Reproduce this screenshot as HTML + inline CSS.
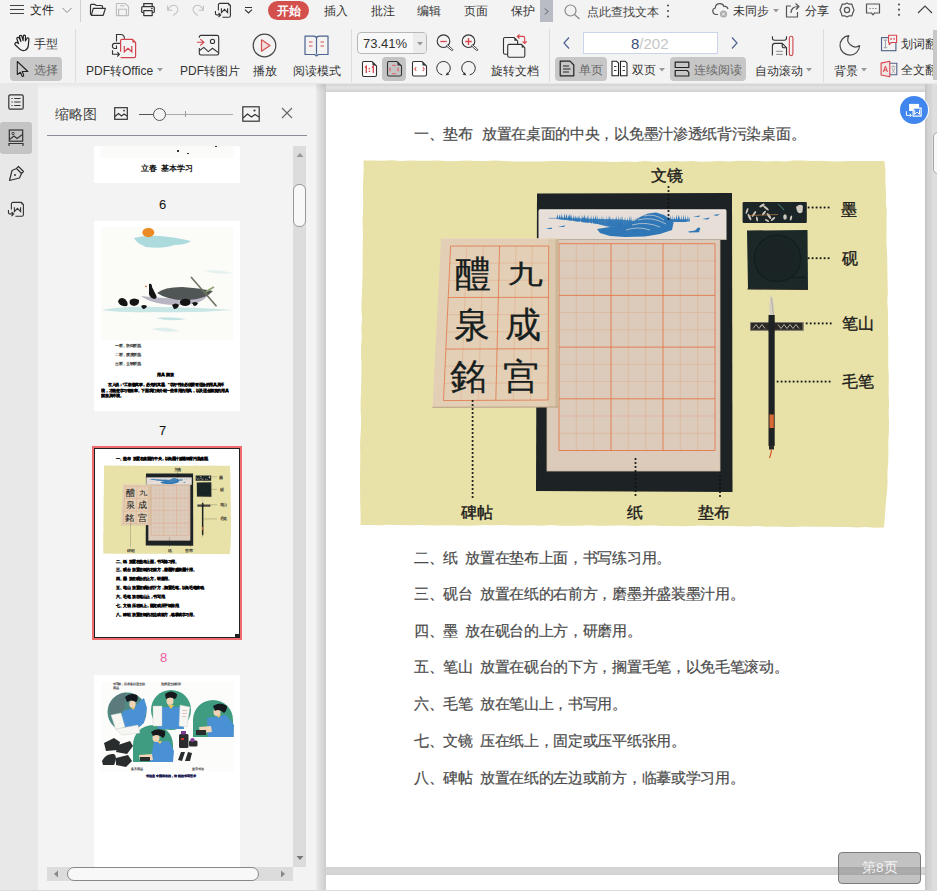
<!DOCTYPE html>
<html><head><meta charset="utf-8">
<style>
*{box-sizing:border-box;margin:0;padding:0}
html,body{width:937px;height:891px;overflow:hidden;background:#f3f3f3;font-family:"Liberation Sans",sans-serif;color:#333}
.a{position:absolute}
.t{position:absolute;white-space:nowrap;line-height:1}
.ln{font-size:14.7px;letter-spacing:-0.3px;color:#4a4a4a;-webkit-text-stroke:0.2px #4a4a4a}
#top{left:0;top:0;width:937px;height:84px;background:#f3f3f3}
#rail{left:0;top:84px;width:38px;height:807px;background:#e8e8e8}
#panel{left:38px;top:84px;width:278px;height:807px;background:#f3f3f3}
#doc{left:316px;top:84px;width:621px;height:807px;background:#dadada}
#page{left:326px;top:92px;width:599px;height:775px;background:#fff;overflow:hidden}
#page2{left:326px;top:875px;width:599px;height:16px;background:#fff}
.th3 .ln{color:#000;font-weight:bold;-webkit-text-stroke:0.4px #000}
.th3 .t{-webkit-text-stroke:1px #000}
.th2t{color:#222;-webkit-text-stroke:0.6px #222}
.th2b{color:#000;font-weight:bold;-webkit-text-stroke:1px #000}
.th4t{color:#444;-webkit-text-stroke:0.5px #444}
.th4b{color:#1d2250;font-weight:bold;-webkit-text-stroke:1px #1d2250}

</style></head><body>
<div id="top" class="a"></div>
<!-- ROW 1 -->
<svg class="a" style="left:10px;top:4px" width="15" height="12" viewBox="0 0 15 12"><path d="M0 1.5H14M0 5.5H14M0 9.5H14" stroke="#444" stroke-width="1"/></svg>
<div class="t" style="left:30px;top:4px;font-size:12px;color:#222">文件</div>
<svg class="a" style="left:62px;top:7px" width="10" height="7" viewBox="0 0 10 7"><path d="M0.5 1L5 5.5L9.5 1" stroke="#888" stroke-width="1" fill="none"/></svg>
<div class="a" style="left:80px;top:0;width:1px;height:22px;background:#d0d0d0"></div>
<!-- folder -->
<svg class="a" style="left:89px;top:3px" width="18" height="14" viewBox="0 0 18 14"><path d="M1.5 11.8V2.3Q1.5 1.4 2.4 1.4H5.8L7.3 2.5H12.6Q13.5 2.5 13.5 3.4V5.2" stroke="#333" stroke-width="1.2" fill="none" stroke-linejoin="round"/><path d="M2.3 12.3L4.3 5.4H16.4L14.2 12.3Z" stroke="#333" stroke-width="1.2" fill="none" stroke-linejoin="round"/></svg>
<!-- save (disabled) -->
<svg class="a" style="left:115px;top:2px" width="15" height="15" viewBox="0 0 15 15"><path d="M2.1 1.5H10.4L13.5 4.6V13Q13.5 13.6 12.9 13.6H2.1Q1.4 13.6 1.4 13V2.2Q1.4 1.5 2.1 1.5Z" stroke="#bdbdbd" stroke-width="1.1" fill="none"/><path d="M5 3.7H9.6M3.6 13.6V7.2H11.4V13.6" stroke="#bdbdbd" stroke-width="1.1" fill="none"/></svg>
<!-- print -->
<svg class="a" style="left:140px;top:2px" width="16" height="15" viewBox="0 0 16 15"><path d="M3.8 4.5V1.6H12.2V4.5" stroke="#333" stroke-width="1.2" fill="none"/><path d="M3.5 10.5H2.7Q1.7 10.5 1.7 9.5V5.6Q1.7 4.6 2.7 4.6H13.3Q14.3 4.6 14.3 5.6V9.5Q14.3 10.5 13.3 10.5H12.5" stroke="#333" stroke-width="1.2" fill="none"/><path d="M10.9 6.6H12.7" stroke="#333" stroke-width="1"/><path d="M3.8 8.7H12.2V13.6H3.8Z" stroke="#333" stroke-width="1.2" fill="none" stroke-linejoin="round"/></svg>
<!-- undo -->
<svg class="a" style="left:166px;top:3px" width="14" height="14" viewBox="0 0 14 14"><path d="M2.2 6.6C3.5 3.6 5.8 2.3 7.6 2.3C10 2.3 11.9 4 11.9 6.5C11.9 8.6 10.3 10.4 7.2 12.6M1.6 2.4V7.2H6.3" stroke="#c2c2c2" stroke-width="1.1" fill="none"/></svg>
<!-- redo -->
<svg class="a" style="left:191px;top:3px" width="14" height="14" viewBox="0 0 14 14"><path d="M11.8 6.6C10.5 3.6 8.2 2.3 6.4 2.3C4 2.3 2.1 4 2.1 6.5C2.1 8.6 3.7 10.4 6.8 12.6M12.4 2.4V7.2H7.7" stroke="#c2c2c2" stroke-width="1.1" fill="none"/></svg>
<!-- export W -->
<svg class="a" style="left:214px;top:2px" width="18" height="17" viewBox="0 0 18 17"><path d="M4.4 8.6V2.9Q4.4 1.4 5.9 1.4H14.4L16.4 3.4V13.8Q16.4 15.3 14.9 15.3H8.4" stroke="#333" stroke-width="1.1" fill="none"/><path d="M14.4 1.6L16.2 3.4H14.4Z" fill="#333"/><path d="M7.4 6.2V10.7L10.5 7.4L13.6 10.7V6.2" stroke="#333" stroke-width="1.1" fill="none"/><path d="M1.45 9.1V11.5Q1.45 12.9 2.8 12.9H6.6M4.5 10.8L6.7 12.9L4.5 15.1" stroke="#333" stroke-width="1.1" fill="none"/></svg>
<svg class="a" style="left:244px;top:6px" width="9" height="9" viewBox="0 0 9 9"><path d="M1 1.5H8 M1 3.6L4.5 7L8 3.6" stroke="#333" stroke-width="1.1" fill="none"/></svg>
<!-- tabs -->
<div class="a" style="left:268px;top:1px;width:41px;height:19px;border-radius:10px;background:#d3504d"></div>
<div class="t" style="left:277px;top:5px;font-size:12px;color:#fff;font-weight:bold">开始</div>
<div class="t" style="left:324px;top:5px;font-size:12px;color:#333">插入</div>
<div class="t" style="left:371px;top:5px;font-size:12px;color:#333">批注</div>
<div class="t" style="left:417px;top:5px;font-size:12px;color:#333">编辑</div>
<div class="t" style="left:464px;top:5px;font-size:12px;color:#333">页面</div>
<div class="t" style="left:511px;top:5px;font-size:12px;color:#333">保护</div>
<div class="a" style="left:540px;top:0;width:13px;height:22px;background:#b9bcc4"></div>
<svg class="a" style="left:544px;top:8px" width="5" height="7" viewBox="0 0 5 7"><path d="M1 0.5L4 3.5L1 6.5" stroke="#555" stroke-width="1" fill="none"/></svg>
<!-- search -->
<svg class="a" style="left:564px;top:4px" width="17" height="16" viewBox="0 0 17 16"><circle cx="6.5" cy="6.5" r="5.5" stroke="#888" stroke-width="1.2" fill="none"/><path d="M10.5 10.5L15.5 15" stroke="#888" stroke-width="1.2"/></svg>
<div class="t" style="left:587px;top:6px;font-size:12px;color:#444">点此查找文本</div>
<svg class="a" style="left:666px;top:4px" width="4" height="15" viewBox="0 0 4 15"><circle cx="2" cy="1.5" r="1.1" fill="#555"/><circle cx="2" cy="7" r="1.1" fill="#555"/><circle cx="2" cy="12.5" r="1.1" fill="#555"/></svg>
<!-- cloud -->
<svg class="a" style="left:712px;top:2px" width="18" height="16" viewBox="0 0 18 16"><path d="M6 12.5H4A3.3 3.3 0 0 1 3.3 6A4.5 4.5 0 0 1 12 4.5A3.5 3.5 0 0 1 16 7" stroke="#555" stroke-width="1.2" fill="none"/><circle cx="11.5" cy="12" r="3.6" fill="#aaa"/><path d="M10 10.5L13 13.5M13 10.5L10 13.5" stroke="#fff" stroke-width="1"/></svg>
<div class="t" style="left:733px;top:5px;font-size:12px;color:#333">未同步</div>
<svg class="a" style="left:773px;top:9px" width="6" height="4" viewBox="0 0 6 4"><path d="M0 0H6L3 3.5Z" fill="#999"/></svg>
<!-- share -->
<svg class="a" style="left:785px;top:2px" width="16" height="16" viewBox="0 0 16 16"><path d="M6 4H1.5V15H12.5V10 M6 11C6 6.5 9 4.5 13 4.5 M10.5 1.5L14 4.5L11 7.5" stroke="#555" stroke-width="1.2" fill="none" stroke-linejoin="round"/></svg>
<div class="t" style="left:805px;top:5px;font-size:12px;color:#333">分享</div>
<!-- gear -->
<svg class="a" style="left:839px;top:2px" width="16" height="16" viewBox="0 0 16 16"><path d="M8 1L10.2 2.2L12.9 2.2L13.6 4.6L15 8L13.6 11.4L12.9 13.8L10.2 13.8L8 15L5.8 13.8L3.1 13.8L2.4 11.4L1 8L2.4 4.6L3.1 2.2L5.8 2.2Z" stroke="#555" stroke-width="1.2" fill="none" stroke-linejoin="round"/><circle cx="8" cy="8" r="2.6" stroke="#555" stroke-width="1.2" fill="none"/></svg>
<!-- comment -->
<svg class="a" style="left:865px;top:3px" width="16" height="14" viewBox="0 0 16 14"><path d="M1.5 1H14.5V10H9.5L8 11.8L6.5 10H1.5Z" stroke="#555" stroke-width="1.2" fill="none" stroke-linejoin="round"/><path d="M4.5 5.5H6M7.3 5.5H8.8M10 5.5H11.5" stroke="#888" stroke-width="1.2"/></svg>
<svg class="a" style="left:897px;top:3px" width="4" height="15" viewBox="0 0 4 15"><circle cx="2" cy="1.5" r="1.1" fill="#555"/><circle cx="2" cy="6.7" r="1.1" fill="#555"/><circle cx="2" cy="11.8" r="1.1" fill="#555"/></svg>
<svg class="a" style="left:917px;top:5px" width="16" height="9" viewBox="0 0 16 9"><path d="M1 8L8 1L15 8" stroke="#444" stroke-width="1.2" fill="none"/></svg>

<!-- ROW 2 -->
<!-- hand -->
<svg class="a" style="left:13px;top:34px" width="18" height="18" viewBox="0 0 18 18"><path d="M1.9 9.6Q2.6 8 4 8.6L5.6 9.6L3.9 5Q3.6 3.6 5 3.3Q5.8 3.2 6.4 4.2L7.9 7.4L6.6 2.6Q6.4 1.4 7.6 1.3Q8.5 1.2 8.9 2.3L10.1 6.7L10.4 2Q10.6 1 11.6 1.1Q12.6 1.3 12.5 2.4L12.4 7L14 4.3Q14.6 3.6 15.4 4Q16.2 4.5 15.9 5.4L15.3 11.6Q15 14.9 12.2 16.2Q9.6 17.2 7.3 15.6L2.6 11.2Q1.6 10.4 1.9 9.6Z" stroke="#222" stroke-width="1.2" fill="none" stroke-linejoin="round"/></svg>
<div class="t" style="left:34px;top:38px;font-size:12px;color:#333">手型</div>
<div class="a" style="left:10px;top:57px;width:52px;height:24px;border-radius:4px;background:#c7c7c7"></div>
<svg class="a" style="left:16px;top:60px" width="14" height="18" viewBox="0 0 14 18"><path d="M1.3 1.5V14.5L4.5 12.3L5.9 15.8Q6.3 16.7 7.2 16.3Q8 15.9 7.6 15L6.3 11.5H11.9Z" stroke="#222" stroke-width="1.1" fill="none" stroke-linejoin="round"/></svg>
<div class="t" style="left:34px;top:64px;font-size:12px;color:#666">选择</div>
<div class="a" style="left:75px;top:29px;width:1px;height:53px;background:#dcdcdc"></div>
<!-- PDF to office -->
<svg class="a" style="left:110px;top:33px" width="28" height="27" viewBox="0 0 28 27"><g stroke="#333" stroke-width="1.1" fill="none"><path d="M6.5 8.6V1.5H10.5Q14.5 1.5 14.5 5.7"/><path d="M10.2 10.4H4.8Q2.4 10.4 2.4 13Q2.4 15.5 4.8 15.5H6.5V12.6"/><path d="M2.5 17.3V21.3H9.2M7.3 19.1L9.4 21.3L7.3 23.5"/></g><g stroke="#d3434b" stroke-width="1.2" fill="none"><path d="M10.6 18.8V7.8Q10.6 6.4 12 6.4H22.5L25.6 9.5V23.2Q25.6 24.6 24.2 24.6H10.6"/><path d="M14.3 13.1V18.8L18 15.4L21.8 18.8V13.1"/></g><path d="M22.4 6.7L25.3 9.6H22.4Z" fill="#d3434b"/></svg>
<div class="t" style="left:86px;top:65px;font-size:12px;color:#333">PDF转Office</div>
<svg class="a" style="left:157px;top:68px" width="6" height="4" viewBox="0 0 6 4"><path d="M0 0H6L3 3.5Z" fill="#999"/></svg>
<!-- PDF to image -->
<svg class="a" style="left:196px;top:34px" width="25" height="23" viewBox="0 0 25 23"><g stroke="#333" stroke-width="1.1" fill="none"><path d="M3.3 3.8V3.1Q3.3 1.4 5 1.4H21Q22.7 1.4 22.7 3.1V19.3Q22.7 21 21 21H5Q3.3 21 3.3 19.3V14.1"/><circle cx="16.5" cy="7.4" r="2.1"/><path d="M3.3 16.7L7.8 13.4L12.3 17.6L16.5 14.3L22.7 18.9"/></g><path d="M1 8.3H7.8M4.3 5.1L7.9 8.3L4.3 11.5" stroke="#d3434b" stroke-width="1.1" fill="none"/></svg>
<div class="t" style="left:180px;top:65px;font-size:12px;color:#333">PDF转图片</div>
<!-- play -->
<svg class="a" style="left:252px;top:33px" width="25" height="25" viewBox="0 0 25 25"><circle cx="12.5" cy="12.5" r="11.3" stroke="#444" stroke-width="1.2" fill="none"/><path d="M9.5 6.8V18.2L18 12.5Z" stroke="#d3504d" stroke-width="1.2" fill="#f3dede" stroke-linejoin="round"/></svg>
<div class="t" style="left:253px;top:65px;font-size:12px;color:#333">播放</div>
<!-- book -->
<svg class="a" style="left:304px;top:35px" width="25" height="22" viewBox="0 0 25 22"><path d="M1 1.2H9.5C11 1.2 12.5 2.2 12.5 3.5C12.5 2.2 14 1.2 15.5 1.2H24V19.5H14.5L12.5 21L10.5 19.5H1Z M12.5 3.5V19.5" stroke="#4d6390" stroke-width="1.2" fill="none" stroke-linejoin="round"/><path d="M5 7H8.5M5 11H8.5M16.5 7H20M16.5 11H20" stroke="#d3504d" stroke-width="1.2"/></svg>
<div class="t" style="left:293px;top:65px;font-size:12px;color:#333">阅读模式</div>
<div class="a" style="left:351px;top:29px;width:1px;height:53px;background:#dcdcdc"></div>
<!-- zoom combo -->
<div class="a" style="left:357px;top:32px;width:70px;height:22px;border:1px solid #b8b8b8;border-radius:4px;background:#f8f8f8;overflow:hidden"><div class="a" style="left:55px;top:0;width:14px;height:20px;background:#ececec"></div></div>
<div class="t" style="left:363px;top:37px;font-size:13px;color:#333">73.41%</div>
<svg class="a" style="left:417px;top:42px" width="6" height="4" viewBox="0 0 6 4"><path d="M0 0H6L3 3.5Z" fill="#999"/></svg>
<!-- zoom out / in -->
<svg class="a" style="left:434px;top:33px" width="21" height="20" viewBox="0 0 21 20"><circle cx="9.5" cy="8.2" r="6.3" stroke="#333" stroke-width="1.1" fill="none"/><path d="M6.3 8.5H12.7" stroke="#d9434b" stroke-width="1.3"/><path d="M13.6 11.8L18.7 16.3Q19.2 16.9 18.6 17.4Q18 17.9 17.4 17.3L12.4 12.9Z" stroke="#333" stroke-width="0.9" fill="#fff"/></svg>
<svg class="a" style="left:459px;top:33px" width="21" height="20" viewBox="0 0 21 20"><circle cx="9.5" cy="8.2" r="6.3" stroke="#333" stroke-width="1.1" fill="none"/><path d="M6.3 8.5H12.7M9.5 5.1V12" stroke="#d9434b" stroke-width="1.3"/><path d="M13.6 11.8L18.7 16.3Q19.2 16.9 18.6 17.4Q18 17.9 17.4 17.3L12.4 12.9Z" stroke="#333" stroke-width="0.9" fill="#fff"/></svg>
<!-- fit icons -->
<svg class="a" style="left:361px;top:60px" width="17" height="18" viewBox="0 0 17 18"><path d="M2.8 1.5H11L15.5 6V15Q15.5 16.5 14 16.5H2.8Q1.5 16.5 1.5 15V3Q1.5 1.5 2.8 1.5Z" stroke="#333" stroke-width="1.1" fill="#fff"/><path d="M11.5 1.8L15.2 5.5H11.5Z" fill="#333"/><path d="M4 7.5L5.3 6.3V13 M11 7.5L12.3 6.3V13" stroke="#d9434b" stroke-width="1.3" fill="none"/><rect x="7.7" y="8" width="1.4" height="1.3" fill="#d9434b"/><rect x="7.7" y="10.7" width="1.4" height="1.3" fill="#d9434b"/></svg>
<div class="a" style="left:382px;top:57px;width:24px;height:24px;border-radius:4px;background:#c4c4c4"></div>
<svg class="a" style="left:386px;top:60px" width="17" height="18" viewBox="0 0 17 18"><path d="M2.8 1.5H11L15.5 6V14.5Q15.5 16 14 16H2.8Q1.5 16 1.5 14.5V3Q1.5 1.5 2.8 1.5Z" stroke="#333" stroke-width="1.1" fill="none"/><path d="M11.5 1.8L15.2 5.5H11.5Z" fill="#333"/><g stroke="#e05a60" stroke-width="1.1" fill="none"><path d="M6.3 5.6A5 5 0 0 1 9.7 5.6"/><path d="M6.3 13.4A5 5 0 0 0 9.7 13.4"/><path d="M4.2 7.6A5 5 0 0 0 4.2 11.4"/><path d="M11.8 7.6A5 5 0 0 1 11.8 11.4"/></g></svg>
<svg class="a" style="left:411px;top:60px" width="17" height="18" viewBox="0 0 17 18"><path d="M2.8 1.5H11L15.5 6V14.5Q15.5 16 14 16H2.8Q1.5 16 1.5 14.5V3Q1.5 1.5 2.8 1.5Z" stroke="#333" stroke-width="1.1" fill="#fff"/><path d="M11.5 1.8L15.2 5.5H11.5Z" fill="#333"/><path d="M5.2 7L3.8 9L5.2 11M11.8 7L13.2 9L11.8 11" stroke="#e05a60" stroke-width="1.1" fill="none"/></svg>
<svg class="a" style="left:434px;top:60px" width="18" height="18" viewBox="0 0 18 18"><path d="M8.3 14.9A6.8 6.8 0 1 1 12.9 14.1" stroke="#333" stroke-width="1" fill="none"/><path d="M11.6 15.4L13.2 12.2L15.5 14.5Z" fill="#333"/></svg>
<svg class="a" style="left:459px;top:60px" width="18" height="18" viewBox="0 0 18 18"><path d="M10.7 14.9A6.8 6.8 0 1 0 6.1 14.1" stroke="#333" stroke-width="1" fill="none"/><path d="M7.4 15.4L5.8 12.2L3.5 14.5Z" fill="#333"/></svg>
<!-- rotate doc -->
<svg class="a" style="left:502px;top:33px" width="28" height="26" viewBox="0 0 28 26"><path d="M3 4.5H12.2L15.6 7.9V20Q15.6 21.3 14.3 21.3H3Q1.5 21.3 1.5 19.8V6Q1.5 4.5 3 4.5Z" stroke="#333" stroke-width="1.1" fill="#f3f3f3"/><path d="M12.4 4.8L15.3 7.7H12.4Z" fill="#333"/><path d="M7.2 11.4H19.5L22.8 14.7V22.7Q22.8 24.2 21.3 24.2H7.2Q5.7 24.2 5.7 22.7V12.9Q5.7 11.4 7.2 11.4Z" stroke="#333" stroke-width="1.1" fill="#f3f3f3"/><path d="M19.7 11.7L22.5 14.5H19.7Z" fill="#333"/><path d="M15.4 3.4H21Q22.7 3.4 22.7 5.2V10.3 M17.5 1.3L15.3 3.4L17.5 5.5 M20.6 8.4L22.7 10.5L24.8 8.4" stroke="#d9434b" stroke-width="1.1" fill="none"/></svg>
<div class="t" style="left:491px;top:65px;font-size:12px;color:#333">旋转文档</div>
<div class="a" style="left:549px;top:29px;width:1px;height:53px;background:#dcdcdc"></div>
<!-- page nav -->
<svg class="a" style="left:563px;top:37px" width="7" height="12" viewBox="0 0 7 12"><path d="M6 0.5L1 6L6 11.5" stroke="#4d6390" stroke-width="1.2" fill="none"/></svg>
<div class="a" style="left:583px;top:32px;width:135px;height:22px;border:1px solid #c9d5ea;background:#fff"></div>
<div class="t" style="left:631px;top:36px;font-size:15px;color:#3d4b78">8<span style="color:#c6c6c6">/202</span></div>
<svg class="a" style="left:731px;top:37px" width="7" height="12" viewBox="0 0 7 12"><path d="M1 0.5L6 6L1 11.5" stroke="#4d6390" stroke-width="1.2" fill="none"/></svg>
<div class="a" style="left:555px;top:57px;width:52px;height:24px;border-radius:4px;background:#c7c7c7"></div>
<svg class="a" style="left:559px;top:60px" width="16" height="17" viewBox="0 0 16 17"><path d="M1.2 1.2H11L14.8 5V15.8H1.2Z" stroke="#222" stroke-width="1.2" fill="none" stroke-linejoin="round"/><path d="M4 6H10M4 9H11.5M4 12H10" stroke="#222" stroke-width="1.1"/></svg>
<div class="t" style="left:579px;top:64px;font-size:12px;color:#666">单页</div>
<svg class="a" style="left:611px;top:60px" width="17" height="17" viewBox="0 0 17 17"><path d="M1 1.2H5.5L7.5 3.2V15.8H1Z M9.5 1.2H14L16 3.2V15.8H9.5Z" stroke="#222" stroke-width="1.1" fill="#fff" stroke-linejoin="round"/><path d="M3 6.5H5.5M3 10.5H5.5M11.5 6.5H14M11.5 10.5H14" stroke="#444" stroke-width="1"/></svg>
<div class="t" style="left:632px;top:64px;font-size:12px;color:#333">双页</div>
<svg class="a" style="left:659px;top:68px" width="6" height="4" viewBox="0 0 6 4"><path d="M0 0H6L3 3.5Z" fill="#999"/></svg>
<div class="a" style="left:670px;top:57px;width:76px;height:24px;border-radius:4px;background:#c7c7c7"></div>
<svg class="a" style="left:674px;top:61px" width="16" height="16" viewBox="0 0 16 16"><path d="M1.2 1.2H14.8V6.5H1.2Z M1.2 9.5H13L14.8 11.3V15H1.2Z" stroke="#222" stroke-width="1.2" fill="none" stroke-linejoin="round"/></svg>
<div class="t" style="left:694px;top:64px;font-size:12px;color:#666">连续阅读</div>
<!-- auto scroll -->
<svg class="a" style="left:770px;top:35px" width="25" height="22" viewBox="0 0 25 22"><g stroke="#333" stroke-width="1.1" fill="none"><path d="M2.4 1.2V3Q2.4 5.2 4.6 5.2H14.3Q16.5 5.2 16.5 3V1.2"/><path d="M2.4 20.6V11Q2.4 8.4 5 8.4H12.2L16.5 12.7V20.6"/><path d="M12.2 8.6V10.9Q12.2 12.8 14.2 12.8H16.4"/></g><path d="M6.2 16.3H12.8M6.2 19.4H12.8" stroke="#8a8a8a" stroke-width="1"/><rect x="19.3" y="1.3" width="3.6" height="19.3" rx="1.8" stroke="#d3434b" stroke-width="1.1" fill="none"/></svg>
<div class="t" style="left:755px;top:65px;font-size:12px;color:#333">自动滚动</div>
<svg class="a" style="left:806px;top:68px" width="6" height="4" viewBox="0 0 6 4"><path d="M0 0H6L3 3.5Z" fill="#999"/></svg>
<div class="a" style="left:823px;top:29px;width:1px;height:53px;background:#dcdcdc"></div>
<!-- moon -->
<svg class="a" style="left:838px;top:34px" width="23" height="22" viewBox="0 0 23 22"><path d="M10.8 1.6A9.8 9.8 0 1 0 21.6 11.6A7.6 7.6 0 0 1 10.8 1.6Z" stroke="#4a4a4a" stroke-width="1.2" fill="none" stroke-linejoin="round"/></svg>
<div class="t" style="left:834px;top:65px;font-size:12px;color:#333">背景</div>
<svg class="a" style="left:861px;top:68px" width="6" height="4" viewBox="0 0 6 4"><path d="M0 0H6L3 3.5Z" fill="#999"/></svg>
<!-- translate icons -->
<svg class="a" style="left:880px;top:34px" width="18" height="18" viewBox="0 0 18 18"><rect x="1.5" y="3.6" width="14.4" height="13.1" stroke="#4d5f86" stroke-width="1.1" fill="none"/><path d="M3.6 6.1H7.3M5.45 6.1V13.7M3.6 13.7H7.3" stroke="#9aa0aa" stroke-width="1"/><path d="M8.6 1.3H16.6V8.5H11.3L9.2 10.6V8.5H8.6Z" stroke="#d9434b" stroke-width="1.1" fill="#f3f3f3" stroke-linejoin="round"/><rect x="10.4" y="4.2" width="1.5" height="1.5" fill="#d9434b"/><rect x="13.4" y="4.2" width="1.5" height="1.5" fill="#d9434b"/></svg>
<div class="t" style="left:901px;top:38px;font-size:12px;color:#333">划词翻译</div>
<svg class="a" style="left:880px;top:60px" width="18" height="18" viewBox="0 0 18 18"><path d="M9.8 3.3H16.8V14.7H9.8" stroke="#4d5f86" stroke-width="1.1" fill="none"/><path d="M11.4 6.6H15.4M13.4 5.4V6.6M11.9 7.6Q13.3 12.4 15.3 13.2M14.9 7.6Q13.5 12.4 11.5 13.2" stroke="#9a9a9a" stroke-width="0.8" fill="none"/><path d="M1.1 3.1L9.8 1.3V16.8L1.1 15Z" stroke="#d9434b" stroke-width="1.1" fill="#f1e6e6" stroke-linejoin="round"/><path d="M3.3 12L5.4 6.2L7.5 12M3.9 10.1H6.9" stroke="#d9434b" stroke-width="1" fill="none"/></svg>
<div class="t" style="left:901px;top:64px;font-size:12px;color:#333">全文翻译</div>
<div class="a" style="left:933px;top:30px;width:4px;height:50px;background:#c8c8c8"></div>

<div id="rail" class="a"></div>
<div id="panel" class="a"></div>
<div id="doc" class="a"></div>
<!-- LEFT RAIL -->
<svg class="a" style="left:8px;top:94px" width="16" height="16" viewBox="0 0 16 16"><rect x="0.8" y="0.8" width="14.4" height="14.4" rx="1.5" stroke="#333" stroke-width="1.2" fill="none"/><path d="M3.5 4.5H4.7M6.2 4.5H12.5M3.5 8H4.7M6.2 8H12.5M3.5 11.5H4.7M6.2 11.5H12.5" stroke="#333" stroke-width="1.2"/></svg>
<div class="a" style="left:0;top:122px;width:32px;height:32px;border-radius:3px;background:#c4c4c4"></div>
<svg class="a" style="left:8px;top:129px" width="16" height="18" viewBox="0 0 16 18"><rect x="1.3" y="1" width="13.4" height="11.2" stroke="#333" stroke-width="1.2" fill="none"/><circle cx="5" cy="4.5" r="1.2" stroke="#333" stroke-width="0.9" fill="none"/><path d="M1.5 10.5L6 7L9 9.5L14.5 5.5" stroke="#333" stroke-width="1.1" fill="none"/><path d="M1 17V14.5H15V17" stroke="#333" stroke-width="1.2" fill="none"/></svg>
<svg class="a" style="left:8px;top:165px" width="17" height="17" viewBox="0 0 17 17"><path d="M10.5 1.5L15.5 6.5L13.5 8.5L8.5 3.5Z M8.5 3.5L4 5.5L1.5 15.5L11.5 13L13.5 8.5" stroke="#333" stroke-width="1.2" fill="none" stroke-linejoin="round"/><circle cx="7" cy="10" r="1" fill="#333"/></svg>
<svg class="a" style="left:7px;top:201px" width="18" height="17" viewBox="0 0 18 17"><path d="M4.4 8.6V2.9Q4.4 1.4 5.9 1.4H14.4L16.4 3.4V13.8Q16.4 15.3 14.9 15.3H8.4" stroke="#333" stroke-width="1.1" fill="none"/><path d="M14.4 1.6L16.2 3.4H14.4Z" fill="#333"/><path d="M7.4 6.2V10.7L10.5 7.4L13.6 10.7V6.2" stroke="#333" stroke-width="1.1" fill="none"/><path d="M1.45 9.1V11.5Q1.45 12.9 2.8 12.9H6.6M4.5 10.8L6.7 12.9L4.5 15.1" stroke="#333" stroke-width="1.1" fill="none"/></svg>
<!-- PANEL HEADER -->
<div class="t" style="left:55px;top:107px;font-size:14px;color:#444">缩略图</div>
<svg class="a" style="left:114px;top:107px" width="14" height="13" viewBox="0 0 14 13"><rect x="0.7" y="0.7" width="12.6" height="11.6" stroke="#333" stroke-width="1.2" fill="none"/><path d="M1 9.5L4.5 6.5L7.5 9L10 7L13 9" stroke="#333" stroke-width="1.1" fill="none"/><circle cx="10" cy="3.6" r="0.9" fill="#333"/></svg>
<div class="a" style="left:139px;top:114px;width:15px;height:1px;background:#555"></div>
<div class="a" style="left:165px;top:114px;width:68px;height:1px;background:#aaa"></div>
<div class="a" style="left:185px;top:111px;width:1px;height:6px;background:#999"></div>
<div class="a" style="left:153px;top:108px;width:13px;height:13px;border-radius:50%;border:1.2px solid #555;background:#f3f3f3"></div>
<svg class="a" style="left:242px;top:106px" width="18" height="16" viewBox="0 0 18 16"><rect x="0.8" y="0.8" width="16.4" height="14.4" stroke="#333" stroke-width="1.2" fill="none"/><path d="M1 12L5.5 8L9.5 11L13 8.5L17 11" stroke="#333" stroke-width="1.2" fill="none"/><circle cx="12.5" cy="4.5" r="1.1" fill="#333"/></svg>
<svg class="a" style="left:281px;top:107px" width="12" height="12" viewBox="0 0 12 12"><path d="M1 1L11 11M11 1L1 11" stroke="#666" stroke-width="1.1"/></svg>
<div class="a" style="left:47px;top:135px;width:260px;height:1px;background:#8b8b98"></div>
<!-- SCROLLBARS -->
<div class="a" style="left:293px;top:146px;width:13px;height:721px;background:#dcdcdc"></div>
<svg class="a" style="left:296px;top:152px" width="8" height="6" viewBox="0 0 8 6"><path d="M0.5 5H7.5L4 1Z" fill="#999"/></svg>
<svg class="a" style="left:296px;top:855px" width="8" height="6" viewBox="0 0 8 6"><path d="M0.5 1H7.5L4 5Z" fill="#777"/></svg>
<div class="a" style="left:293px;top:184px;width:13px;height:43px;border-radius:6px;border:1px solid #999;background:#f8f8f8"></div>
<div class="a" style="left:47px;top:867px;width:246px;height:14px;background:#dcdcdc"></div>
<svg class="a" style="left:53px;top:870px" width="6" height="8" viewBox="0 0 6 8"><path d="M5 0.5V7.5L1 4Z" fill="#888"/></svg>
<svg class="a" style="left:280px;top:870px" width="6" height="8" viewBox="0 0 6 8"><path d="M1 0.5V7.5L5 4Z" fill="#888"/></svg>
<div class="a" style="left:67px;top:867px;width:192px;height:14px;border-radius:7px;border:1px solid #888;background:#f8f8f8"></div>
<!-- THUMB AREA -->
<div class="a" style="left:47px;top:146px;width:246px;height:721px;overflow:hidden">
  <!-- thumb 1 -->
  <div class="a" style="left:47px;top:-10px;width:146px;height:47px;background:#fff">
    <div class="a" style="left:6px;top:0;width:134px;height:22px;background:#fbfbf9"></div>
    <div class="a" style="left:83px;top:14px;width:1.5px;height:1.5px;background:#333"></div>
    <div class="a" style="left:93px;top:16.5px;width:1.5px;height:1.5px;background:#333"></div>
    <div class="a" style="left:121px;top:9.5px;width:2px;height:1.5px;background:#333"></div>
    <div class="t" style="left:47px;top:29px;font-size:8px;color:#111;font-weight:bold">立春&nbsp; 基本学习</div>
  </div>
  <div class="t" style="left:112px;top:52px;font-size:13px;color:#111">6</div>
  <!-- thumb 2 -->
  <div id="th2" class="a" style="left:47px;top:75px;width:146px;height:190px;background:#fff"><svg class="a" style="left:0;top:0" width="146" height="190" viewBox="0 0 146 190">
<rect x="7.5" y="6.4" width="132" height="113" fill="#fbfbf8"/>
<g fill="#9ad3d6" opacity="0.8">
<path d="M40 17 Q52 14 66 15 Q80 16 97 20 Q92 24 80 24 Q70 28 52 26 Q42 22 40 17Z"/>
<path d="M8 89 Q30 85 60 86 Q100 86 138 89 Q100 92 60 91 Q30 92 8 89Z" opacity="0.65"/>
<path d="M62 97 Q75 95 92 98 Q76 101 62 97Z" opacity="0.7"/>
<path d="M58 108 Q70 104 85 110 Q70 112 58 108Z" opacity="0.35"/>
<path d="M110 50 Q125 48 138 52 Q125 54 110 50Z" opacity="0.3"/>
</g>
<ellipse cx="54.3" cy="11.6" rx="6" ry="4.6" fill="#ec8a26"/>
<path d="M47 75 Q60 85 90 84 Q108 83 114 74 Q95 79 70 77 Q55 76 47 75Z" fill="#b8b4c4"/>
<path d="M63 72 Q70 66 88 66 Q105 67 119 70 Q112 78 95 79 Q75 80 63 72Z" fill="#4f5655"/>
<path d="M97 56 L122.5 85.3" stroke="#6d7460" stroke-width="1.6"/>
<path d="M112 71 Q116 68 120 66" stroke="#8aa36c" stroke-width="1.6" fill="none"/>
<g fill="#141414">
<path d="M55 63 Q58 62 58 66 L62 74 Q64 77 60 78 Q54 76 55 70Z"/>
<path d="M24 80 Q26 75 31 78 Q35 82 33 85 Q25 86 24 80Z"/>
<path d="M36 79 Q40 76 45 79 Q46 84 40 85 Q34 84 36 79Z"/>
<path d="M86 80 Q90 76 96 79 Q98 84 92 85 Q85 85 86 80Z"/>
<path d="M78 84 Q82 81 85 84 Q84 88 80 88Z"/>
<path d="M98 82 Q101 80 104 82 Q103 85 100 85Z"/>
<path d="M47 85 Q50 83 53 85 Q52 88 49 88Z"/>
</g>
<path d="M51 65 L53 65.5" stroke="#e86a2a" stroke-width="1.2"/>
</svg>
<div class="a" style="left:0;top:0;width:604px;height:786px;transform-origin:0 0;transform:scale(0.2416)">
<div class="t th2t" style="left:87px;top:509px;font-size:14.7px">一桥，折间桥游。</div>
<div class="t th2t" style="left:87px;top:546px;font-size:14.7px">二桥，渡度桥游。</div>
<div class="t th2t" style="left:87px;top:583px;font-size:14.7px">三桥，去朝桥游。</div>
<div class="t th2b" style="left:262px;top:627px;font-size:17px">用具摆放</div>
<div class="t th2b" style="left:58px;top:671px;font-size:14.7px">古人说：“工欲善其事，必先利其器。”学好书法必须要有适合的用具及环</div>
<div class="t th2b" style="left:31px;top:694px;font-size:14.7px">境，才能使学习有效率。下面我们来介绍一些常用的用具，以及适合摆放的用具</div>
<div class="t th2b" style="left:31px;top:717px;font-size:14.7px">摆放及环境。</div>
</div>
</div>
  <div class="t" style="left:112px;top:278px;font-size:13px;color:#111">7</div>
  <!-- thumb 3 selected -->
  <div class="a" style="left:45px;top:300px;width:150px;height:194px;background:#f06b6e"></div>
  <div class="a" style="left:47px;top:302px;width:146px;height:190px;background:#222"></div>
  <div id="th3" class="a" style="left:48px;top:303px;width:144px;height:188px;background:#fff;overflow:hidden"><div class="a th3" style="left:0;top:0;width:599px;height:777px;transform-origin:0 0;transform:scale(0.2416);background:#fff"><svg class="a" style="left:0;top:0" width="599" height="777" viewBox="0 0 599 777">
<path d="M37.5 68.5 L46.6 68.6 L56.1 68.7 L65.7 68.2 L74.6 69.0 L84.2 68.5 L94.2 68.7 L103.4 68.8 L112.6 68.5 L122.0 69.2 L131.3 69.1 L140.8 68.6 L150.0 69.0 L159.6 69.1 L168.6 68.6 L178.5 69.1 L187.7 69.5 L197.1 69.5 L206.2 69.5 L215.6 69.6 L225.3 68.9 L234.0 69.0 L244.2 69.3 L253.2 69.2 L262.5 69.3 L271.7 69.5 L281.3 69.8 L290.8 69.9 L300.0 69.5 L309.7 69.9 L318.9 69.1 L328.4 69.8 L337.9 69.4 L347.1 69.1 L356.5 69.4 L365.4 68.9 L375.3 69.7 L384.0 69.5 L393.7 68.9 L402.9 69.4 L412.8 68.7 L422.0 68.7 L431.4 68.9 L441.0 69.5 L450.0 69.0 L459.0 69.4 L467.9 68.6 L477.2 68.6 L485.9 68.9 L495.3 68.7 L503.8 69.3 L513.1 69.4 L522.7 68.9 L531.3 69.0 L540.5 69.1 L549.5 69.1 L558.5 69.0 L559.4 79.3 L559.4 89.9 L560.0 100.0 L559.9 109.8 L560.8 120.0 L560.5 129.6 L560.6 140.1 L560.4 150.1 L561.0 160.0 L561.3 169.6 L561.4 180.0 L561.6 189.9 L561.8 200.2 L561.3 209.6 L562.0 220.4 L562.0 230.0 L561.9 239.1 L562.3 248.0 L562.2 257.1 L562.2 266.4 L562.3 275.3 L562.8 284.1 L562.7 293.8 L562.6 302.5 L563.1 311.6 L562.6 320.9 L563.0 330.0 L562.9 339.6 L562.3 349.9 L562.4 359.9 L562.2 369.7 L561.4 380.1 L561.6 390.0 L561.0 400.0 L559.8 411.5 L559.0 423.4 L558.0 435.5 L549.3 435.7 L539.7 435.1 L531.3 435.4 L522.3 435.0 L512.7 434.9 L504.3 434.8 L494.9 434.8 L485.9 434.8 L477.4 434.4 L467.6 435.1 L459.3 435.0 L450.0 434.5 L440.6 434.8 L431.6 434.1 L422.1 434.6 L412.6 434.3 L402.9 434.0 L393.5 433.7 L384.5 433.9 L375.3 433.6 L366.0 434.1 L356.6 434.2 L347.2 433.9 L337.1 434.0 L327.8 433.5 L318.9 433.6 L309.3 434.0 L300.0 433.5 L290.7 433.4 L281.0 433.8 L271.9 433.8 L262.4 433.2 L253.2 433.8 L243.5 433.8 L234.8 433.8 L225.3 433.1 L215.7 433.8 L205.8 433.3 L196.7 433.5 L187.4 433.5 L178.4 433.1 L168.3 433.2 L159.0 433.1 L150.0 433.5 L140.8 433.8 L130.4 433.4 L121.0 433.2 L111.4 433.5 L102.0 433.2 L92.0 433.1 L82.3 433.3 L73.2 433.1 L63.0 432.8 L53.6 433.2 L44.4 432.9 L34.5 433.0 L34.6 422.4 L34.2 411.4 L34.1 400.9 L34.0 390.0 L34.0 381.2 L34.2 371.8 L34.3 363.2 L34.0 353.9 L34.4 345.3 L35.0 335.9 L35.1 327.3 L34.6 318.0 L34.6 309.3 L35.0 300.0 L35.2 291.3 L35.4 282.0 L35.5 272.8 L35.0 263.7 L35.0 254.2 L35.8 245.0 L35.3 236.0 L36.1 227.0 L35.4 218.5 L35.6 209.4 L36.0 200.0 L36.3 190.3 L36.7 180.1 L36.6 169.6 L36.7 160.0 L36.8 149.6 L37.0 140.4 L36.5 129.8 L37.0 120.0 L37.2 109.9 L37.0 98.9 L37.1 88.9 L37.6 78.3 L37.5 68.0Z" fill="#e8e2a8"/>
<!-- felt pad -->
<path d="M211 101.5 L406 101 L406.5 400 L210 399 Z" fill="#1d2325"/>
<!-- paper -->
<rect x="221" y="146" width="173" height="233" fill="#dccbba"/>
<rect x="221" y="146" width="173" height="233" fill="none" stroke="#cfb9a0" stroke-width="0.8"/>
<path d="M233.0 151.7 V358.5" stroke="#e46f3c" stroke-width="1.0" opacity="0.8"/>
<path d="M250.3 151.7 V358.5" stroke="#e46f3c" stroke-width="0.7" opacity="0.25"/>
<path d="M267.7 151.7 V358.5" stroke="#e46f3c" stroke-width="0.7" opacity="0.25"/>
<path d="M285.0 151.7 V358.5" stroke="#e46f3c" stroke-width="1.0" opacity="0.8"/>
<path d="M302.3 151.7 V358.5" stroke="#e46f3c" stroke-width="0.7" opacity="0.25"/>
<path d="M319.7 151.7 V358.5" stroke="#e46f3c" stroke-width="0.7" opacity="0.25"/>
<path d="M337.0 151.7 V358.5" stroke="#e46f3c" stroke-width="1.0" opacity="0.8"/>
<path d="M354.3 151.7 V358.5" stroke="#e46f3c" stroke-width="0.7" opacity="0.25"/>
<path d="M371.7 151.7 V358.5" stroke="#e46f3c" stroke-width="0.7" opacity="0.25"/>
<path d="M389.0 151.7 V358.5" stroke="#e46f3c" stroke-width="1.0" opacity="0.8"/>
<path d="M233 151.7 H389" stroke="#e46f3c" stroke-width="1.0" opacity="0.8"/>
<path d="M233 168.9 H389" stroke="#e46f3c" stroke-width="0.7" opacity="0.25"/>
<path d="M233 186.2 H389" stroke="#e46f3c" stroke-width="0.7" opacity="0.25"/>
<path d="M233 203.4 H389" stroke="#e46f3c" stroke-width="1.0" opacity="0.8"/>
<path d="M233 220.6 H389" stroke="#e46f3c" stroke-width="0.7" opacity="0.25"/>
<path d="M233 237.9 H389" stroke="#e46f3c" stroke-width="0.7" opacity="0.25"/>
<path d="M233 255.1 H389" stroke="#e46f3c" stroke-width="1.0" opacity="0.8"/>
<path d="M233 272.3 H389" stroke="#e46f3c" stroke-width="0.7" opacity="0.25"/>
<path d="M233 289.6 H389" stroke="#e46f3c" stroke-width="0.7" opacity="0.25"/>
<path d="M233 306.8 H389" stroke="#e46f3c" stroke-width="1.0" opacity="0.8"/>
<path d="M233 324.0 H389" stroke="#e46f3c" stroke-width="0.7" opacity="0.25"/>
<path d="M233 341.3 H389" stroke="#e46f3c" stroke-width="0.7" opacity="0.25"/>
<path d="M233 358.5 H389" stroke="#e46f3c" stroke-width="1.0" opacity="0.8"/>
<!-- paperweight -->
<rect x="212.5" y="117.5" width="188" height="30.5" rx="1.5" fill="#e7dfd7"/>
<path d="M213 147.5 H400.5" stroke="#b8ad9f" stroke-width="1.2"/>
<path d="M213 118 H400" stroke="#f2ede8" stroke-width="1"/>
<g fill="#2f77b6">
<rect x="222.70000000000005" y="125.80000000000001" width="17" height="0.9" opacity="0.6"/>
<path d="M230.5 127.0 L231.5 122.1 L232.5 127.0Z" opacity="1"/>
<path d="M232.6 127.3 L233.6 122.2 L234.5 127.3Z" opacity="1"/>
<path d="M234.3 127.5 L235.3 121.6 L236.2 127.5Z" opacity="1"/>
<path d="M236.1 127.7 L236.7 123.2 L237.4 127.7Z" opacity="1"/>
<path d="M237.4 127.9 L238.6 121.5 L239.8 127.9Z" opacity="1"/>
<path d="M239.3 128.1 L240.6 121.4 L241.8 128.1Z" opacity="1"/>
<path d="M241.4 128.3 L242.5 123.0 L243.5 128.3Z" opacity="1"/>
<path d="M242.6 128.5 L243.6 121.4 L244.6 128.5Z" opacity="1"/>
<path d="M243.7 128.6 L244.5 121.9 L245.2 128.6Z" opacity="1"/>
<path d="M244.7 128.7 L245.6 122.6 L246.5 128.7Z" opacity="1"/>
<path d="M246.7 129.0 L247.8 122.8 L248.8 129.0Z" opacity="1"/>
<path d="M248.3 129.2 L249.3 123.3 L250.2 129.2Z" opacity="1"/>
<path d="M249.7 129.4 L251.0 124.1 L252.3 129.4Z" opacity="1"/>
<path d="M251.7 129.6 L252.5 123.5 L253.3 129.6Z" opacity="1"/>
<path d="M252.9 129.8 L253.6 122.5 L254.2 129.8Z" opacity="1"/>
<path d="M254.9 130.0 L256.1 122.8 L257.3 130.0Z" opacity="1"/>
<path d="M256.3 130.2 L257.5 124.3 L258.7 130.2Z" opacity="1"/>
<path d="M257.3 130.3 L258.6 122.4 L259.8 130.3Z" opacity="1"/>
<path d="M258.9 130.5 L259.8 124.4 L260.7 130.5Z" opacity="1"/>
<path d="M260.0 130.6 L261.1 123.6 L262.3 130.6Z" opacity="1"/>
<path d="M261.3 130.8 L262.1 122.3 L263.0 130.8Z" opacity="1"/>
<path d="M263.5 131.1 L264.1 124.0 L264.8 131.1Z" opacity="1"/>
<path d="M264.8 131.2 L265.4 122.4 L266.0 131.2Z" opacity="1"/>
<path d="M266.7 131.5 L267.7 122.7 L268.7 131.5Z" opacity="1"/>
<path d="M268.3 131.6 L269.4 122.7 L270.5 131.6Z" opacity="1"/>
<path d="M269.4 131.8 L270.1 123.9 L270.8 131.8Z" opacity="1"/>
<path d="M270.9 132.0 L271.7 122.9 L272.5 132.0Z" opacity="1"/>
<path d="M273.1 132.2 L273.9 124.4 L274.7 132.2Z" opacity="1"/>
<path d="M275.1 132.5 L276.0 123.0 L276.9 132.5Z" opacity="1"/>
<path d="M277.2 132.7 L277.8 124.2 L278.5 132.7Z" opacity="1"/>
<path d="M279.4 133.0 L280.1 123.2 L280.9 133.0Z" opacity="1"/>
<path d="M281.3 133.2 L282.1 123.5 L282.9 133.2Z" opacity="1"/>
<path d="M282.4 133.4 L283.4 123.0 L284.4 133.4Z" opacity="1"/>
<path d="M283.7 133.5 L284.5 124.3 L285.4 133.5Z" opacity="1"/>
<path d="M285.2 133.7 L286.1 125.2 L287.1 133.7Z" opacity="1"/>
<path d="M286.9 133.9 L287.6 125.1 L288.4 133.9Z" opacity="1"/>
<path d="M288.1 134.1 L289.3 125.2 L290.4 134.1Z" opacity="1"/>
<path d="M289.4 134.2 L290.5 123.4 L291.6 134.2Z" opacity="1"/>
<path d="M291.5 134.5 L292.8 123.5 L294.0 134.5Z" opacity="1"/>
<path d="M293.6 134.8 L294.5 124.6 L295.4 134.8Z" opacity="1"/>
<path d="M294.7 134.9 L296.0 123.2 L297.2 134.9Z" opacity="1"/>
<path d="M296.0 135.0 L296.8 125.0 L297.5 135.0Z" opacity="1"/>
<path d="M298.0 135.3 L298.8 124.8 L299.6 135.3Z" opacity="1"/>
<path d="M299.2 135.4 L299.8 125.1 L300.5 135.4Z" opacity="1"/>
<path d="M300.5 135.6 L301.6 124.7 L302.8 135.6Z" opacity="1"/>
<path d="M302.2 135.8 L303.4 124.1 L304.7 135.8Z" opacity="1"/>
<path d="M303.4 136.0 L304.2 123.5 L305.0 136.0Z" opacity="1"/>
<path d="M305.0 136.2 L305.7 123.6 L306.4 136.2Z" opacity="1"/>
<path d="M306.4 136.3 L307.1 125.0 L307.8 136.3Z" opacity="1"/>
<path d="M307.8 136.5 L309.1 125.8 L310.4 136.5Z" opacity="1"/>
<path d="M309.6 136.7 L310.6 125.4 L311.7 136.7Z" opacity="1"/>
<path d="M310.8 136.9 L311.4 123.8 L312.0 136.9Z" opacity="1"/>
<path d="M312.9 137.1 L314.2 125.5 L315.4 137.1Z" opacity="1"/>
<path d="M313.9 137.3 L314.9 125.4 L315.8 137.3Z" opacity="1"/>
<path d="M315.8 137.5 L317.1 124.7 L318.4 137.5Z" opacity="1"/>
<path d="M316.9 137.6 L318.0 125.3 L319.1 137.6Z" opacity="1"/>
<path d="M319.0 137.9 L320.1 125.8 L321.2 137.9Z" opacity="1"/>
<path d="M231.0 127.0 L249.0 128.0 L266.0 130.5 L279.0 134.0 L294.0 137.0 L320.0 136.0 L320.0 130.0 L294.0 127.5 L274.0 127.0 L254.0 126.5 L234.0 126.0Z" opacity="0.9"/>
<path d="M271.0 137.0 L284.0 135.0 L299.0 134.0 L319.0 132.0 L334.0 134.0 L347.5 131.0 L346.0 138.0 L334.0 142.0 L319.0 144.5 L299.0 145.0 L284.0 144.0 L274.0 141.0Z" opacity="1"/>
<path d="M304.0 132.0 L314.0 125.0 L322.0 121.5 L330.0 120.5 L338.0 123.0 L344.0 127.0 L347.8 131.0 L339.0 137.0 L324.0 140.0 L309.0 139.0Z" opacity="1"/>
<path d="M338.0 129.5 L338.8 124.2 L339.6 129.5Z" opacity="1"/>
<path d="M340.0 129.5 L341.1 124.2 L342.3 129.5Z" opacity="1"/>
<path d="M341.7 129.5 L342.8 123.8 L344.0 129.5Z" opacity="1"/>
<path d="M343.6 129.5 L344.4 123.2 L345.3 129.5Z" opacity="1"/>
<path d="M345.5 129.5 L346.2 123.1 L346.8 129.5Z" opacity="1"/>
<path d="M347.5 129.5 L348.6 124.5 L349.7 129.5Z" opacity="1"/>
<path d="M349.6 129.5 L350.6 122.4 L351.6 129.5Z" opacity="1"/>
<path d="M351.4 129.5 L352.6 122.5 L353.7 129.5Z" opacity="1"/>
<path d="M352.7 129.5 L353.4 123.6 L354.0 129.5Z" opacity="1"/>
<path d="M354.7 129.5 L355.4 122.7 L356.1 129.5Z" opacity="1"/>
<path d="M356.7 129.5 L357.7 122.7 L358.6 129.5Z" opacity="1"/>
<path d="M359.0 129.5 L359.6 121.9 L360.2 129.5Z" opacity="1"/>
<path d="M360.6 129.5 L361.3 123.4 L362.0 129.5Z" opacity="1"/>
<path d="M362.0 129.5 L363.0 124.2 L364.0 129.5Z" opacity="1"/>
<path d="M338.0 127.0 L363.0 127.5 L360.0 130.0 L340.0 130.0Z" opacity="1"/>
<path d="M231.8 134.5 L239.3 133.5 L238.0 135.0Z" opacity="1"/>
<path d="M219.5 137.0 L225.4 135.5 L226.0 137.0Z" opacity="1"/>
<path d="M367.0 124.5 L374.0 123.5 L373.0 125.0Z" opacity="1"/>
<path d="M376.0 127.0 L384.0 125.5 L382.0 127.5Z" opacity="1"/>
<path d="M387.0 123.0 L394.0 122.0 L391.0 124.0Z" opacity="1"/>
<path d="M362.2 139.5 L369.0 138.5 L372.0 135.4 L374.4 136.0 L373.0 140.2 L363.0 140.5Z" opacity="1"/>
</g>
<g stroke="#e7dfd7" stroke-width="0.8" fill="none" opacity="0.8">
<path d="M318 124 Q328 121 338 128"/><path d="M312 128 Q326 124 340 132"/><path d="M306 133 Q320 129 334 135"/><path d="M300 138 Q312 134 324 138"/>
</g>
<!-- book -->
<path d="M115 146.5 L232.5 146.5 L233 315 L106.5 315.5 Z" fill="#e2cfb5"/>
<path d="M222 146.5 L232.5 146.5 L233 315 L222 315.5 Z" fill="#dcc8ad"/>
<path d="M229.5 147 L233 147 L233 315 L229.5 315 Z" fill="#cdb596"/>
<path d="M106.5 315.3 L233 315" stroke="#b8a083" stroke-width="1"/>
<path d="M115 146.8 L232.5 146.8" stroke="#eadbc4" stroke-width="0.8"/>
<path d="M124.6 154.0 L117.5 308.6" stroke="#e2774a" stroke-width="1.0" opacity="0.8"/>
<path d="M140.9 154.0 L134.9 308.5" stroke="#e2774a" stroke-width="0.7" opacity="0.3"/>
<path d="M157.3 154.0 L152.3 308.4" stroke="#e2774a" stroke-width="0.7" opacity="0.3"/>
<path d="M173.6 154.0 L169.8 308.3" stroke="#e2774a" stroke-width="1.0" opacity="0.8"/>
<path d="M190.0 154.0 L187.2 308.2" stroke="#e2774a" stroke-width="0.7" opacity="0.3"/>
<path d="M206.3 154.0 L204.6 308.1" stroke="#e2774a" stroke-width="0.7" opacity="0.3"/>
<path d="M222.7 154.0 L222.0 308.0" stroke="#e2774a" stroke-width="1.0" opacity="0.8"/>
<path d="M124.6 154.0 L222.7 154.0" stroke="#e2774a" stroke-width="1.0" opacity="0.8"/>
<path d="M123.8 171.2 L222.6 171.1" stroke="#e2774a" stroke-width="0.7" opacity="0.3"/>
<path d="M123.0 188.4 L222.5 188.2" stroke="#e2774a" stroke-width="0.7" opacity="0.3"/>
<path d="M122.2 205.5 L222.5 205.3" stroke="#e2774a" stroke-width="1.0" opacity="0.8"/>
<path d="M121.4 222.7 L222.4 222.4" stroke="#e2774a" stroke-width="0.7" opacity="0.3"/>
<path d="M120.7 239.9 L222.3 239.6" stroke="#e2774a" stroke-width="0.7" opacity="0.3"/>
<path d="M119.9 257.1 L222.2 256.7" stroke="#e2774a" stroke-width="1.0" opacity="0.8"/>
<path d="M119.1 274.2 L222.2 273.8" stroke="#e2774a" stroke-width="0.7" opacity="0.3"/>
<path d="M118.3 291.4 L222.1 290.9" stroke="#e2774a" stroke-width="0.7" opacity="0.3"/>
<path d="M117.5 308.6 L222.0 308.0" stroke="#e2774a" stroke-width="1.0" opacity="0.8"/>
<g font-family="Liberation Serif,serif" fill="#172020" stroke="#172020" stroke-width="0.2" font-size="36">
<text x="129" y="194">醴</text><text x="181" y="191" transform="translate(181 191) scale(1 0.72) translate(-181 -191)">九</text>
<text x="128" y="245">泉</text><text x="179" y="245">成</text>
<text x="124" y="297">銘</text><text x="177" y="297">宫</text>
</g>
<!-- ink stick -->
<rect x="416.6" y="110.1" width="64.2" height="21" rx="1" fill="#1b2426"/>
<g fill="#e4dccf" opacity="0.9">
<ellipse cx="421" cy="119" rx="1" ry="3.2" transform="rotate(20 421 119)"/>
<ellipse cx="423.5" cy="125" rx="1.1" ry="3.5" transform="rotate(-25 423.5 125)"/>
<ellipse cx="428" cy="122" rx="1" ry="3.4" transform="rotate(35 428 122)"/>
<ellipse cx="431" cy="127" rx="0.9" ry="2.6" transform="rotate(-10 431 127)"/>
<ellipse cx="436" cy="113.5" rx="1.2" ry="3" transform="rotate(60 436 113.5)"/>
<ellipse cx="440" cy="116" rx="1.1" ry="3.4" transform="rotate(-50 440 116)"/>
<ellipse cx="438" cy="121" rx="1" ry="2.8" transform="rotate(40 438 121)"/>
<ellipse cx="443" cy="124" rx="1.1" ry="3.5" transform="rotate(-35 443 124)"/>
<ellipse cx="447" cy="127" rx="1" ry="2.8" transform="rotate(50 447 127)"/>
<ellipse cx="441" cy="128.5" rx="0.9" ry="2.4" transform="rotate(-60 441 128.5)"/>
<ellipse cx="459" cy="125" rx="1.8" ry="2.8"/>
<ellipse cx="465" cy="126" rx="1" ry="2.5" transform="rotate(15 465 126)"/>
<path d="M470 115 Q474 111 477 114 L476.5 120 Q473 123 471 119Z"/>
</g>
<path d="M423 123.5 L452 122.5" stroke="#c98a4a" stroke-width="0.8" opacity="0.8"/>
<path d="M452 112 Q456 115 458 118" stroke="#3f8f6a" stroke-width="1" fill="none"/>
<!-- inkstone -->
<path d="M421 138.5 L481.5 138 L482 197.5 L422 197 Z" fill="#1c2728"/>
<circle cx="451.5" cy="166.5" r="23" fill="none" stroke="#141d1e" stroke-width="1.6"/>
<circle cx="451.5" cy="166.5" r="21" fill="#1a2425"/>
<path d="M466 185.5 L481 185.5" stroke="#141d1e" stroke-width="1.2"/>
<path d="M421.5 197 L482 197.5" stroke="#2f2b26" stroke-width="1"/>
<!-- brush -->
<path d="M443.6 224 Q443 212 444.2 205 Q445.2 201 446.3 205 Q448.2 212 448.3 224 Z" fill="#d5cfc2"/>
<path d="M445.5 206 Q446.5 214 447.5 224" stroke="#a9a293" stroke-width="0.7" fill="none"/>
<rect x="442.5" y="223" width="6.2" height="131" fill="#1f2222"/>
<rect x="443.5" y="322.5" width="4.3" height="13.5" fill="#d96a33"/>
<rect x="443" y="353" width="5" height="4.5" fill="#2a2a2a"/>
<path d="M445.5 357.5 Q445.5 361 443.5 366" stroke="#d24a1e" stroke-width="1.1" fill="none"/>
<!-- brush rest -->
<rect x="424" y="230" width="53.5" height="8.7" fill="#2b2925"/>
<rect x="424.5" y="230.5" width="52.5" height="7.7" fill="none" stroke="#a49c8f" stroke-width="0.7"/>
<g stroke="#d9d1c3" stroke-width="0.8" fill="none"><path d="M427 236.5L430 232.5L433 236.5L436 232.5L439 236.5M452 232.5L455 236.5L458 232.5L461 236.5L464 232.5L467 236.5L470 232.5L473 236.5"/></g>
<rect x="442.5" y="229.5" width="6.2" height="10" fill="#1f2222"/>
<!-- dotted leader lines -->
<rect x="341.6" y="94.1" width="1.8" height="1.8" fill="#111"/><rect x="341.6" y="98.1" width="1.8" height="1.8" fill="#111"/><rect x="341.6" y="102.1" width="1.8" height="1.8" fill="#111"/><rect x="341.6" y="106.1" width="1.8" height="1.8" fill="#111"/><rect x="341.6" y="110.1" width="1.8" height="1.8" fill="#111"/><rect x="341.6" y="114.1" width="1.8" height="1.8" fill="#111"/><rect x="341.6" y="118.1" width="1.8" height="1.8" fill="#111"/><rect x="341.6" y="122.1" width="1.8" height="1.8" fill="#111"/><rect x="341.6" y="126.1" width="1.8" height="1.8" fill="#111"/>
<rect x="481.7" y="114.6" width="1.8" height="1.8" fill="#111"/><rect x="485.7" y="114.6" width="1.8" height="1.8" fill="#111"/><rect x="489.7" y="114.6" width="1.8" height="1.8" fill="#111"/><rect x="493.7" y="114.6" width="1.8" height="1.8" fill="#111"/><rect x="497.7" y="114.6" width="1.8" height="1.8" fill="#111"/><rect x="501.7" y="114.6" width="1.8" height="1.8" fill="#111"/>
<rect x="481.7" y="165.3" width="1.8" height="1.8" fill="#111"/><rect x="485.7" y="165.3" width="1.8" height="1.8" fill="#111"/><rect x="489.7" y="165.3" width="1.8" height="1.8" fill="#111"/><rect x="493.7" y="165.3" width="1.8" height="1.8" fill="#111"/><rect x="497.7" y="165.3" width="1.8" height="1.8" fill="#111"/><rect x="501.7" y="165.3" width="1.8" height="1.8" fill="#111"/>
<rect x="479.8" y="230.5" width="1.8" height="1.8" fill="#111"/><rect x="483.8" y="230.5" width="1.8" height="1.8" fill="#111"/><rect x="487.8" y="230.5" width="1.8" height="1.8" fill="#111"/><rect x="491.8" y="230.5" width="1.8" height="1.8" fill="#111"/><rect x="495.8" y="230.5" width="1.8" height="1.8" fill="#111"/><rect x="499.8" y="230.5" width="1.8" height="1.8" fill="#111"/><rect x="503.8" y="230.5" width="1.8" height="1.8" fill="#111"/>
<rect x="450.7" y="288.7" width="1.8" height="1.8" fill="#111"/><rect x="454.7" y="288.7" width="1.8" height="1.8" fill="#111"/><rect x="458.7" y="288.7" width="1.8" height="1.8" fill="#111"/><rect x="462.7" y="288.7" width="1.8" height="1.8" fill="#111"/><rect x="466.7" y="288.7" width="1.8" height="1.8" fill="#111"/><rect x="470.7" y="288.7" width="1.8" height="1.8" fill="#111"/><rect x="474.7" y="288.7" width="1.8" height="1.8" fill="#111"/><rect x="478.7" y="288.7" width="1.8" height="1.8" fill="#111"/><rect x="482.7" y="288.7" width="1.8" height="1.8" fill="#111"/><rect x="486.7" y="288.7" width="1.8" height="1.8" fill="#111"/><rect x="490.7" y="288.7" width="1.8" height="1.8" fill="#111"/><rect x="494.7" y="288.7" width="1.8" height="1.8" fill="#111"/><rect x="498.7" y="288.7" width="1.8" height="1.8" fill="#111"/><rect x="502.7" y="288.7" width="1.8" height="1.8" fill="#111"/>
<rect x="145.7" y="308.1" width="1.8" height="1.8" fill="#111"/><rect x="145.7" y="312.1" width="1.8" height="1.8" fill="#111"/><rect x="145.7" y="316.1" width="1.8" height="1.8" fill="#111"/><rect x="145.7" y="320.1" width="1.8" height="1.8" fill="#111"/><rect x="145.7" y="324.1" width="1.8" height="1.8" fill="#111"/><rect x="145.7" y="328.1" width="1.8" height="1.8" fill="#111"/><rect x="145.7" y="332.1" width="1.8" height="1.8" fill="#111"/><rect x="145.7" y="336.1" width="1.8" height="1.8" fill="#111"/><rect x="145.7" y="340.1" width="1.8" height="1.8" fill="#111"/><rect x="145.7" y="344.1" width="1.8" height="1.8" fill="#111"/><rect x="145.7" y="348.1" width="1.8" height="1.8" fill="#111"/><rect x="145.7" y="352.1" width="1.8" height="1.8" fill="#111"/><rect x="145.7" y="356.1" width="1.8" height="1.8" fill="#111"/><rect x="145.7" y="360.1" width="1.8" height="1.8" fill="#111"/><rect x="145.7" y="364.1" width="1.8" height="1.8" fill="#111"/><rect x="145.7" y="368.1" width="1.8" height="1.8" fill="#111"/><rect x="145.7" y="372.1" width="1.8" height="1.8" fill="#111"/><rect x="145.7" y="376.1" width="1.8" height="1.8" fill="#111"/><rect x="145.7" y="380.1" width="1.8" height="1.8" fill="#111"/><rect x="145.7" y="384.1" width="1.8" height="1.8" fill="#111"/><rect x="145.7" y="388.1" width="1.8" height="1.8" fill="#111"/><rect x="145.7" y="392.1" width="1.8" height="1.8" fill="#111"/><rect x="145.7" y="396.1" width="1.8" height="1.8" fill="#111"/><rect x="145.7" y="400.1" width="1.8" height="1.8" fill="#111"/><rect x="145.7" y="404.1" width="1.8" height="1.8" fill="#111"/>
<rect x="308.6" y="366.1" width="1.8" height="1.8" fill="#111"/><rect x="308.6" y="370.1" width="1.8" height="1.8" fill="#111"/><rect x="308.6" y="374.1" width="1.8" height="1.8" fill="#111"/><rect x="308.6" y="378.1" width="1.8" height="1.8" fill="#111"/><rect x="308.6" y="382.1" width="1.8" height="1.8" fill="#111"/><rect x="308.6" y="386.1" width="1.8" height="1.8" fill="#111"/><rect x="308.6" y="390.1" width="1.8" height="1.8" fill="#111"/><rect x="308.6" y="394.1" width="1.8" height="1.8" fill="#111"/><rect x="308.6" y="398.1" width="1.8" height="1.8" fill="#111"/><rect x="308.6" y="402.1" width="1.8" height="1.8" fill="#111"/>
<rect x="393.1" y="383.1" width="1.8" height="1.8" fill="#111"/><rect x="393.1" y="387.1" width="1.8" height="1.8" fill="#111"/><rect x="393.1" y="391.1" width="1.8" height="1.8" fill="#111"/><rect x="393.1" y="395.1" width="1.8" height="1.8" fill="#111"/><rect x="393.1" y="399.1" width="1.8" height="1.8" fill="#111"/><rect x="393.1" y="403.1" width="1.8" height="1.8" fill="#111"/>
</svg>
<div class="t" style="left:325px;top:75.5px;font-size:16px;color:#1a1a1a;-webkit-text-stroke:0.35px #1a1a1a">文镜</div>
<div class="t" style="left:515px;top:110px;font-size:16px;color:#1a1a1a;-webkit-text-stroke:0.35px #1a1a1a">墨</div>
<div class="t" style="left:515.5px;top:159px;font-size:16px;color:#1a1a1a;-webkit-text-stroke:0.35px #1a1a1a">砚</div>
<div class="t" style="left:515.5px;top:224px;font-size:16px;color:#1a1a1a;-webkit-text-stroke:0.35px #1a1a1a">笔山</div>
<div class="t" style="left:515.5px;top:282px;font-size:16px;color:#1a1a1a;-webkit-text-stroke:0.35px #1a1a1a">毛笔</div>
<div class="t" style="left:134.5px;top:413px;font-size:16px;color:#1a1a1a;-webkit-text-stroke:0.35px #1a1a1a">碑帖</div>
<div class="t" style="left:301px;top:412.5px;font-size:16px;color:#1a1a1a;-webkit-text-stroke:0.35px #1a1a1a">纸</div>
<div class="t" style="left:371.5px;top:413px;font-size:16px;color:#1a1a1a;-webkit-text-stroke:0.35px #1a1a1a">垫布</div>
<div class="t ln" style="left:88px;top:35.0px">一、垫布<span style="display:inline-block;width:9px"></span>放置在桌面的中央，以免墨汁渗透纸背污染桌面。</div>
<div class="t ln" style="left:88px;top:459.1px">二、纸<span style="display:inline-block;width:7px"></span>放置在垫布上面，书写练习用。</div>
<div class="t ln" style="left:88px;top:495.3px">三、砚台<span style="display:inline-block;width:7px"></span>放置在纸的右前方，磨墨并盛装墨汁用。</div>
<div class="t ln" style="left:88px;top:532.0px">四、墨<span style="display:inline-block;width:7px"></span>放在砚台的上方，研磨用。</div>
<div class="t ln" style="left:88px;top:567.9px">五、笔山<span style="display:inline-block;width:7px"></span>放置在砚台的下方，搁置毛笔，以免毛笔滚动。</div>
<div class="t ln" style="left:88px;top:605.2px">六、毛笔<span style="display:inline-block;width:7px"></span>放在笔山上，书写用。</div>
<div class="t ln" style="left:88px;top:642.0px">七、文镜<span style="display:inline-block;width:7px"></span>压在纸上，固定或压平纸张用。</div>
<div class="t ln" style="left:88px;top:678.5px">八、碑帖<span style="display:inline-block;width:7px"></span>放置在纸的左边或前方，临摹或学习用。</div></div></div>
  <div class="a" style="left:188px;top:488px;width:5px;height:4px;background:#222"></div>
  <div class="t" style="left:113px;top:505px;font-size:13px;color:#ee5fa0">8</div>
  <!-- thumb 4 -->
  <div id="th4" class="a" style="left:47px;top:529px;width:146px;height:200px;background:#fff"><svg class="a" style="left:0;top:0" width="146" height="200" viewBox="0 0 146 200">
<rect x="7" y="7" width="133" height="90" fill="#fcfcfb"/>

<!-- circles -->
<circle cx="33" cy="37" r="19.5" fill="#4f8a84"/>
<path d="M15 30 Q20 19 32 17.6 L30 36 L16 40Z" fill="#5c767a" opacity="0.8"/>
<circle cx="77" cy="35" r="20" fill="#3f9c80"/>
<path d="M99 45 A20 20 0 0 1 139 45 L139.5 62 L99 62Z" fill="#3f9c80"/>
<path d="M39 70 A20 20 0 0 1 79 70 L79 87 L39 87Z" fill="#3f9c80"/>
<g fill="#4a90d4">
<path d="M29 36L40 33L46 26L50 23L53 33L50 48L42 54L30 52L27 44Z"/>
<path d="M66 32L88 32L90 54L64 54Z"/>
<path d="M113 43L132 40L140 50L139.5 62L114 62Z"/>
<path d="M60 67L75 66L80 76L79 87L56 87Z"/>
</g>
<g fill="#e9c45a"><path d="M36 32L41 31L40 35Z"/><path d="M74 30L80 30L77 34Z"/><path d="M122 40L127 39L125 43Z"/><path d="M63 66L68 66L66 69Z"/></g>
<g fill="#f1d3b5"><ellipse cx="38.5" cy="29" rx="3.2" ry="3.8"/><ellipse cx="76" cy="26" rx="3.5" ry="4"/><ellipse cx="123" cy="37" rx="3.5" ry="4"/><ellipse cx="62" cy="63" rx="3.5" ry="4"/><path d="M105 52L117 51L118 57L106 58Z"/><path d="M45 80L58 79L59 85L46 86Z"/></g>
<g fill="#15181c"><path d="M31 22Q36 17 43 20Q45 24 42 27Q37 24 33 27Z"/><path d="M71 19Q77 14 83 19Q83 23 81 24Q76 21 72 24Z"/><path d="M119 31Q126 26 133 31Q133 36 130 38Q125 33 121 36Z"/><path d="M57 57Q63 52 71 56Q72 61 69 63Q64 58 59 61Z"/></g>
<g fill="#f6f6f2" stroke="#c8c8c8" stroke-width="0.4"><path d="M17 40L27 38L31 52L22 55Z"/><path d="M59 31L68 31L68 51L59 51Z"/><path d="M86 30L96 32L93 52L85 51Z"/><path d="M22 54L44 50L46 58L28 60Z"/></g>
<g fill="#d98a8a" opacity="0.6"><rect x="88" y="35" width="5" height="0.8"/><rect x="88" y="38" width="5" height="0.8"/><rect x="88" y="41" width="4" height="0.8"/></g>
<path d="M102 55L112 55L112 60L102 60Z" fill="#2a2d2e"/>
<path d="M46 82L56 82L56 86L46 86Z" fill="#2a2d2e"/>
<!-- inkstones -->
<g fill="#2a2d2e"><path d="M10 68 L20 63 L26 67 L24 75 L12 76Z"/><path d="M24 70 L36 66 L39 71 L33 79 L22 77Z"/><path d="M8 86 Q12 78 20 79 Q24 82 20 90 L9 90Z"/><path d="M22 83 L34 80 L38 86 L32 92 L22 90Z"/></g>
<!-- bottle -->
<rect x="85" y="59" width="9.5" height="14" rx="1.5" fill="#2a2c2e"/><rect x="87" y="56" width="5" height="3.5" fill="#7b3b8e"/><rect x="87" y="63" width="3" height="2" fill="#c33"/>
<rect x="95" y="65.5" width="8.5" height="6" rx="1.5" fill="#2a2c2e"/><ellipse cx="98.5" cy="65" rx="2.2" ry="2" fill="#8a3c98"/>
<path d="M84 85 L87 77 L91 77 L88 86Z M91 86 L94 77 L98 78 L96 86Z" fill="#2a2d2e"/>
</svg>
<div class="a" style="left:0;top:0;width:604px;height:828px;transform-origin:0 0;transform:scale(0.2416)">
<div class="t th4t" style="left:77px;top:30px;font-size:12px">书写前，应准备好适当的</div>
<div class="t th4t" style="left:77px;top:50px;font-size:12px">用品</div>
<div class="t th4t" style="left:277px;top:30px;font-size:12px">选择适当的纸张</div>
<div class="t th4t" style="left:155px;top:383px;font-size:12px">备齐用品</div>
<div class="t th4t" style="left:405px;top:383px;font-size:12px">显示书法</div>
<div class="t th4b" style="left:216px;top:413px;font-size:13px">书法是中国特有的，传统的书写艺术</div>
</div>
</div>
</div>

<div id="page" class="a">
<svg class="a" style="left:0;top:0" width="599" height="777" viewBox="0 0 599 777">
<path d="M37.5 68.5 L46.6 68.6 L56.1 68.7 L65.7 68.2 L74.6 69.0 L84.2 68.5 L94.2 68.7 L103.4 68.8 L112.6 68.5 L122.0 69.2 L131.3 69.1 L140.8 68.6 L150.0 69.0 L159.6 69.1 L168.6 68.6 L178.5 69.1 L187.7 69.5 L197.1 69.5 L206.2 69.5 L215.6 69.6 L225.3 68.9 L234.0 69.0 L244.2 69.3 L253.2 69.2 L262.5 69.3 L271.7 69.5 L281.3 69.8 L290.8 69.9 L300.0 69.5 L309.7 69.9 L318.9 69.1 L328.4 69.8 L337.9 69.4 L347.1 69.1 L356.5 69.4 L365.4 68.9 L375.3 69.7 L384.0 69.5 L393.7 68.9 L402.9 69.4 L412.8 68.7 L422.0 68.7 L431.4 68.9 L441.0 69.5 L450.0 69.0 L459.0 69.4 L467.9 68.6 L477.2 68.6 L485.9 68.9 L495.3 68.7 L503.8 69.3 L513.1 69.4 L522.7 68.9 L531.3 69.0 L540.5 69.1 L549.5 69.1 L558.5 69.0 L559.4 79.3 L559.4 89.9 L560.0 100.0 L559.9 109.8 L560.8 120.0 L560.5 129.6 L560.6 140.1 L560.4 150.1 L561.0 160.0 L561.3 169.6 L561.4 180.0 L561.6 189.9 L561.8 200.2 L561.3 209.6 L562.0 220.4 L562.0 230.0 L561.9 239.1 L562.3 248.0 L562.2 257.1 L562.2 266.4 L562.3 275.3 L562.8 284.1 L562.7 293.8 L562.6 302.5 L563.1 311.6 L562.6 320.9 L563.0 330.0 L562.9 339.6 L562.3 349.9 L562.4 359.9 L562.2 369.7 L561.4 380.1 L561.6 390.0 L561.0 400.0 L559.8 411.5 L559.0 423.4 L558.0 435.5 L549.3 435.7 L539.7 435.1 L531.3 435.4 L522.3 435.0 L512.7 434.9 L504.3 434.8 L494.9 434.8 L485.9 434.8 L477.4 434.4 L467.6 435.1 L459.3 435.0 L450.0 434.5 L440.6 434.8 L431.6 434.1 L422.1 434.6 L412.6 434.3 L402.9 434.0 L393.5 433.7 L384.5 433.9 L375.3 433.6 L366.0 434.1 L356.6 434.2 L347.2 433.9 L337.1 434.0 L327.8 433.5 L318.9 433.6 L309.3 434.0 L300.0 433.5 L290.7 433.4 L281.0 433.8 L271.9 433.8 L262.4 433.2 L253.2 433.8 L243.5 433.8 L234.8 433.8 L225.3 433.1 L215.7 433.8 L205.8 433.3 L196.7 433.5 L187.4 433.5 L178.4 433.1 L168.3 433.2 L159.0 433.1 L150.0 433.5 L140.8 433.8 L130.4 433.4 L121.0 433.2 L111.4 433.5 L102.0 433.2 L92.0 433.1 L82.3 433.3 L73.2 433.1 L63.0 432.8 L53.6 433.2 L44.4 432.9 L34.5 433.0 L34.6 422.4 L34.2 411.4 L34.1 400.9 L34.0 390.0 L34.0 381.2 L34.2 371.8 L34.3 363.2 L34.0 353.9 L34.4 345.3 L35.0 335.9 L35.1 327.3 L34.6 318.0 L34.6 309.3 L35.0 300.0 L35.2 291.3 L35.4 282.0 L35.5 272.8 L35.0 263.7 L35.0 254.2 L35.8 245.0 L35.3 236.0 L36.1 227.0 L35.4 218.5 L35.6 209.4 L36.0 200.0 L36.3 190.3 L36.7 180.1 L36.6 169.6 L36.7 160.0 L36.8 149.6 L37.0 140.4 L36.5 129.8 L37.0 120.0 L37.2 109.9 L37.0 98.9 L37.1 88.9 L37.6 78.3 L37.5 68.0Z" fill="#e8e2a8"/>
<!-- felt pad -->
<path d="M211 101.5 L406 101 L406.5 400 L210 399 Z" fill="#1d2325"/>
<!-- paper -->
<rect x="221" y="146" width="173" height="233" fill="#dccbba"/>
<rect x="221" y="146" width="173" height="233" fill="none" stroke="#cfb9a0" stroke-width="0.8"/>
<path d="M233.0 151.7 V358.5" stroke="#e46f3c" stroke-width="1.0" opacity="0.8"/>
<path d="M250.3 151.7 V358.5" stroke="#e46f3c" stroke-width="0.7" opacity="0.25"/>
<path d="M267.7 151.7 V358.5" stroke="#e46f3c" stroke-width="0.7" opacity="0.25"/>
<path d="M285.0 151.7 V358.5" stroke="#e46f3c" stroke-width="1.0" opacity="0.8"/>
<path d="M302.3 151.7 V358.5" stroke="#e46f3c" stroke-width="0.7" opacity="0.25"/>
<path d="M319.7 151.7 V358.5" stroke="#e46f3c" stroke-width="0.7" opacity="0.25"/>
<path d="M337.0 151.7 V358.5" stroke="#e46f3c" stroke-width="1.0" opacity="0.8"/>
<path d="M354.3 151.7 V358.5" stroke="#e46f3c" stroke-width="0.7" opacity="0.25"/>
<path d="M371.7 151.7 V358.5" stroke="#e46f3c" stroke-width="0.7" opacity="0.25"/>
<path d="M389.0 151.7 V358.5" stroke="#e46f3c" stroke-width="1.0" opacity="0.8"/>
<path d="M233 151.7 H389" stroke="#e46f3c" stroke-width="1.0" opacity="0.8"/>
<path d="M233 168.9 H389" stroke="#e46f3c" stroke-width="0.7" opacity="0.25"/>
<path d="M233 186.2 H389" stroke="#e46f3c" stroke-width="0.7" opacity="0.25"/>
<path d="M233 203.4 H389" stroke="#e46f3c" stroke-width="1.0" opacity="0.8"/>
<path d="M233 220.6 H389" stroke="#e46f3c" stroke-width="0.7" opacity="0.25"/>
<path d="M233 237.9 H389" stroke="#e46f3c" stroke-width="0.7" opacity="0.25"/>
<path d="M233 255.1 H389" stroke="#e46f3c" stroke-width="1.0" opacity="0.8"/>
<path d="M233 272.3 H389" stroke="#e46f3c" stroke-width="0.7" opacity="0.25"/>
<path d="M233 289.6 H389" stroke="#e46f3c" stroke-width="0.7" opacity="0.25"/>
<path d="M233 306.8 H389" stroke="#e46f3c" stroke-width="1.0" opacity="0.8"/>
<path d="M233 324.0 H389" stroke="#e46f3c" stroke-width="0.7" opacity="0.25"/>
<path d="M233 341.3 H389" stroke="#e46f3c" stroke-width="0.7" opacity="0.25"/>
<path d="M233 358.5 H389" stroke="#e46f3c" stroke-width="1.0" opacity="0.8"/>
<!-- paperweight -->
<rect x="212.5" y="117.5" width="188" height="30.5" rx="1.5" fill="#e7dfd7"/>
<path d="M213 147.5 H400.5" stroke="#b8ad9f" stroke-width="1.2"/>
<path d="M213 118 H400" stroke="#f2ede8" stroke-width="1"/>
<g fill="#2f77b6">
<rect x="222.70000000000005" y="125.80000000000001" width="17" height="0.9" opacity="0.6"/>
<path d="M230.5 127.0 L231.5 122.1 L232.5 127.0Z" opacity="1"/>
<path d="M232.6 127.3 L233.6 122.2 L234.5 127.3Z" opacity="1"/>
<path d="M234.3 127.5 L235.3 121.6 L236.2 127.5Z" opacity="1"/>
<path d="M236.1 127.7 L236.7 123.2 L237.4 127.7Z" opacity="1"/>
<path d="M237.4 127.9 L238.6 121.5 L239.8 127.9Z" opacity="1"/>
<path d="M239.3 128.1 L240.6 121.4 L241.8 128.1Z" opacity="1"/>
<path d="M241.4 128.3 L242.5 123.0 L243.5 128.3Z" opacity="1"/>
<path d="M242.6 128.5 L243.6 121.4 L244.6 128.5Z" opacity="1"/>
<path d="M243.7 128.6 L244.5 121.9 L245.2 128.6Z" opacity="1"/>
<path d="M244.7 128.7 L245.6 122.6 L246.5 128.7Z" opacity="1"/>
<path d="M246.7 129.0 L247.8 122.8 L248.8 129.0Z" opacity="1"/>
<path d="M248.3 129.2 L249.3 123.3 L250.2 129.2Z" opacity="1"/>
<path d="M249.7 129.4 L251.0 124.1 L252.3 129.4Z" opacity="1"/>
<path d="M251.7 129.6 L252.5 123.5 L253.3 129.6Z" opacity="1"/>
<path d="M252.9 129.8 L253.6 122.5 L254.2 129.8Z" opacity="1"/>
<path d="M254.9 130.0 L256.1 122.8 L257.3 130.0Z" opacity="1"/>
<path d="M256.3 130.2 L257.5 124.3 L258.7 130.2Z" opacity="1"/>
<path d="M257.3 130.3 L258.6 122.4 L259.8 130.3Z" opacity="1"/>
<path d="M258.9 130.5 L259.8 124.4 L260.7 130.5Z" opacity="1"/>
<path d="M260.0 130.6 L261.1 123.6 L262.3 130.6Z" opacity="1"/>
<path d="M261.3 130.8 L262.1 122.3 L263.0 130.8Z" opacity="1"/>
<path d="M263.5 131.1 L264.1 124.0 L264.8 131.1Z" opacity="1"/>
<path d="M264.8 131.2 L265.4 122.4 L266.0 131.2Z" opacity="1"/>
<path d="M266.7 131.5 L267.7 122.7 L268.7 131.5Z" opacity="1"/>
<path d="M268.3 131.6 L269.4 122.7 L270.5 131.6Z" opacity="1"/>
<path d="M269.4 131.8 L270.1 123.9 L270.8 131.8Z" opacity="1"/>
<path d="M270.9 132.0 L271.7 122.9 L272.5 132.0Z" opacity="1"/>
<path d="M273.1 132.2 L273.9 124.4 L274.7 132.2Z" opacity="1"/>
<path d="M275.1 132.5 L276.0 123.0 L276.9 132.5Z" opacity="1"/>
<path d="M277.2 132.7 L277.8 124.2 L278.5 132.7Z" opacity="1"/>
<path d="M279.4 133.0 L280.1 123.2 L280.9 133.0Z" opacity="1"/>
<path d="M281.3 133.2 L282.1 123.5 L282.9 133.2Z" opacity="1"/>
<path d="M282.4 133.4 L283.4 123.0 L284.4 133.4Z" opacity="1"/>
<path d="M283.7 133.5 L284.5 124.3 L285.4 133.5Z" opacity="1"/>
<path d="M285.2 133.7 L286.1 125.2 L287.1 133.7Z" opacity="1"/>
<path d="M286.9 133.9 L287.6 125.1 L288.4 133.9Z" opacity="1"/>
<path d="M288.1 134.1 L289.3 125.2 L290.4 134.1Z" opacity="1"/>
<path d="M289.4 134.2 L290.5 123.4 L291.6 134.2Z" opacity="1"/>
<path d="M291.5 134.5 L292.8 123.5 L294.0 134.5Z" opacity="1"/>
<path d="M293.6 134.8 L294.5 124.6 L295.4 134.8Z" opacity="1"/>
<path d="M294.7 134.9 L296.0 123.2 L297.2 134.9Z" opacity="1"/>
<path d="M296.0 135.0 L296.8 125.0 L297.5 135.0Z" opacity="1"/>
<path d="M298.0 135.3 L298.8 124.8 L299.6 135.3Z" opacity="1"/>
<path d="M299.2 135.4 L299.8 125.1 L300.5 135.4Z" opacity="1"/>
<path d="M300.5 135.6 L301.6 124.7 L302.8 135.6Z" opacity="1"/>
<path d="M302.2 135.8 L303.4 124.1 L304.7 135.8Z" opacity="1"/>
<path d="M303.4 136.0 L304.2 123.5 L305.0 136.0Z" opacity="1"/>
<path d="M305.0 136.2 L305.7 123.6 L306.4 136.2Z" opacity="1"/>
<path d="M306.4 136.3 L307.1 125.0 L307.8 136.3Z" opacity="1"/>
<path d="M307.8 136.5 L309.1 125.8 L310.4 136.5Z" opacity="1"/>
<path d="M309.6 136.7 L310.6 125.4 L311.7 136.7Z" opacity="1"/>
<path d="M310.8 136.9 L311.4 123.8 L312.0 136.9Z" opacity="1"/>
<path d="M312.9 137.1 L314.2 125.5 L315.4 137.1Z" opacity="1"/>
<path d="M313.9 137.3 L314.9 125.4 L315.8 137.3Z" opacity="1"/>
<path d="M315.8 137.5 L317.1 124.7 L318.4 137.5Z" opacity="1"/>
<path d="M316.9 137.6 L318.0 125.3 L319.1 137.6Z" opacity="1"/>
<path d="M319.0 137.9 L320.1 125.8 L321.2 137.9Z" opacity="1"/>
<path d="M231.0 127.0 L249.0 128.0 L266.0 130.5 L279.0 134.0 L294.0 137.0 L320.0 136.0 L320.0 130.0 L294.0 127.5 L274.0 127.0 L254.0 126.5 L234.0 126.0Z" opacity="0.9"/>
<path d="M271.0 137.0 L284.0 135.0 L299.0 134.0 L319.0 132.0 L334.0 134.0 L347.5 131.0 L346.0 138.0 L334.0 142.0 L319.0 144.5 L299.0 145.0 L284.0 144.0 L274.0 141.0Z" opacity="1"/>
<path d="M304.0 132.0 L314.0 125.0 L322.0 121.5 L330.0 120.5 L338.0 123.0 L344.0 127.0 L347.8 131.0 L339.0 137.0 L324.0 140.0 L309.0 139.0Z" opacity="1"/>
<path d="M338.0 129.5 L338.8 124.2 L339.6 129.5Z" opacity="1"/>
<path d="M340.0 129.5 L341.1 124.2 L342.3 129.5Z" opacity="1"/>
<path d="M341.7 129.5 L342.8 123.8 L344.0 129.5Z" opacity="1"/>
<path d="M343.6 129.5 L344.4 123.2 L345.3 129.5Z" opacity="1"/>
<path d="M345.5 129.5 L346.2 123.1 L346.8 129.5Z" opacity="1"/>
<path d="M347.5 129.5 L348.6 124.5 L349.7 129.5Z" opacity="1"/>
<path d="M349.6 129.5 L350.6 122.4 L351.6 129.5Z" opacity="1"/>
<path d="M351.4 129.5 L352.6 122.5 L353.7 129.5Z" opacity="1"/>
<path d="M352.7 129.5 L353.4 123.6 L354.0 129.5Z" opacity="1"/>
<path d="M354.7 129.5 L355.4 122.7 L356.1 129.5Z" opacity="1"/>
<path d="M356.7 129.5 L357.7 122.7 L358.6 129.5Z" opacity="1"/>
<path d="M359.0 129.5 L359.6 121.9 L360.2 129.5Z" opacity="1"/>
<path d="M360.6 129.5 L361.3 123.4 L362.0 129.5Z" opacity="1"/>
<path d="M362.0 129.5 L363.0 124.2 L364.0 129.5Z" opacity="1"/>
<path d="M338.0 127.0 L363.0 127.5 L360.0 130.0 L340.0 130.0Z" opacity="1"/>
<path d="M231.8 134.5 L239.3 133.5 L238.0 135.0Z" opacity="1"/>
<path d="M219.5 137.0 L225.4 135.5 L226.0 137.0Z" opacity="1"/>
<path d="M367.0 124.5 L374.0 123.5 L373.0 125.0Z" opacity="1"/>
<path d="M376.0 127.0 L384.0 125.5 L382.0 127.5Z" opacity="1"/>
<path d="M387.0 123.0 L394.0 122.0 L391.0 124.0Z" opacity="1"/>
<path d="M362.2 139.5 L369.0 138.5 L372.0 135.4 L374.4 136.0 L373.0 140.2 L363.0 140.5Z" opacity="1"/>
</g>
<g stroke="#e7dfd7" stroke-width="0.8" fill="none" opacity="0.8">
<path d="M318 124 Q328 121 338 128"/><path d="M312 128 Q326 124 340 132"/><path d="M306 133 Q320 129 334 135"/><path d="M300 138 Q312 134 324 138"/>
</g>
<!-- book -->
<path d="M115 146.5 L232.5 146.5 L233 315 L106.5 315.5 Z" fill="#e2cfb5"/>
<path d="M222 146.5 L232.5 146.5 L233 315 L222 315.5 Z" fill="#dcc8ad"/>
<path d="M229.5 147 L233 147 L233 315 L229.5 315 Z" fill="#cdb596"/>
<path d="M106.5 315.3 L233 315" stroke="#b8a083" stroke-width="1"/>
<path d="M115 146.8 L232.5 146.8" stroke="#eadbc4" stroke-width="0.8"/>
<path d="M124.6 154.0 L117.5 308.6" stroke="#e2774a" stroke-width="1.0" opacity="0.8"/>
<path d="M140.9 154.0 L134.9 308.5" stroke="#e2774a" stroke-width="0.7" opacity="0.3"/>
<path d="M157.3 154.0 L152.3 308.4" stroke="#e2774a" stroke-width="0.7" opacity="0.3"/>
<path d="M173.6 154.0 L169.8 308.3" stroke="#e2774a" stroke-width="1.0" opacity="0.8"/>
<path d="M190.0 154.0 L187.2 308.2" stroke="#e2774a" stroke-width="0.7" opacity="0.3"/>
<path d="M206.3 154.0 L204.6 308.1" stroke="#e2774a" stroke-width="0.7" opacity="0.3"/>
<path d="M222.7 154.0 L222.0 308.0" stroke="#e2774a" stroke-width="1.0" opacity="0.8"/>
<path d="M124.6 154.0 L222.7 154.0" stroke="#e2774a" stroke-width="1.0" opacity="0.8"/>
<path d="M123.8 171.2 L222.6 171.1" stroke="#e2774a" stroke-width="0.7" opacity="0.3"/>
<path d="M123.0 188.4 L222.5 188.2" stroke="#e2774a" stroke-width="0.7" opacity="0.3"/>
<path d="M122.2 205.5 L222.5 205.3" stroke="#e2774a" stroke-width="1.0" opacity="0.8"/>
<path d="M121.4 222.7 L222.4 222.4" stroke="#e2774a" stroke-width="0.7" opacity="0.3"/>
<path d="M120.7 239.9 L222.3 239.6" stroke="#e2774a" stroke-width="0.7" opacity="0.3"/>
<path d="M119.9 257.1 L222.2 256.7" stroke="#e2774a" stroke-width="1.0" opacity="0.8"/>
<path d="M119.1 274.2 L222.2 273.8" stroke="#e2774a" stroke-width="0.7" opacity="0.3"/>
<path d="M118.3 291.4 L222.1 290.9" stroke="#e2774a" stroke-width="0.7" opacity="0.3"/>
<path d="M117.5 308.6 L222.0 308.0" stroke="#e2774a" stroke-width="1.0" opacity="0.8"/>
<g font-family="Liberation Serif,serif" fill="#172020" stroke="#172020" stroke-width="0.2" font-size="36">
<text x="129" y="194">醴</text><text x="181" y="191" transform="translate(181 191) scale(1 0.72) translate(-181 -191)">九</text>
<text x="128" y="245">泉</text><text x="179" y="245">成</text>
<text x="124" y="297">銘</text><text x="177" y="297">宫</text>
</g>
<!-- ink stick -->
<rect x="416.6" y="110.1" width="64.2" height="21" rx="1" fill="#1b2426"/>
<g fill="#e4dccf" opacity="0.9">
<ellipse cx="421" cy="119" rx="1" ry="3.2" transform="rotate(20 421 119)"/>
<ellipse cx="423.5" cy="125" rx="1.1" ry="3.5" transform="rotate(-25 423.5 125)"/>
<ellipse cx="428" cy="122" rx="1" ry="3.4" transform="rotate(35 428 122)"/>
<ellipse cx="431" cy="127" rx="0.9" ry="2.6" transform="rotate(-10 431 127)"/>
<ellipse cx="436" cy="113.5" rx="1.2" ry="3" transform="rotate(60 436 113.5)"/>
<ellipse cx="440" cy="116" rx="1.1" ry="3.4" transform="rotate(-50 440 116)"/>
<ellipse cx="438" cy="121" rx="1" ry="2.8" transform="rotate(40 438 121)"/>
<ellipse cx="443" cy="124" rx="1.1" ry="3.5" transform="rotate(-35 443 124)"/>
<ellipse cx="447" cy="127" rx="1" ry="2.8" transform="rotate(50 447 127)"/>
<ellipse cx="441" cy="128.5" rx="0.9" ry="2.4" transform="rotate(-60 441 128.5)"/>
<ellipse cx="459" cy="125" rx="1.8" ry="2.8"/>
<ellipse cx="465" cy="126" rx="1" ry="2.5" transform="rotate(15 465 126)"/>
<path d="M470 115 Q474 111 477 114 L476.5 120 Q473 123 471 119Z"/>
</g>
<path d="M423 123.5 L452 122.5" stroke="#c98a4a" stroke-width="0.8" opacity="0.8"/>
<path d="M452 112 Q456 115 458 118" stroke="#3f8f6a" stroke-width="1" fill="none"/>
<!-- inkstone -->
<path d="M421 138.5 L481.5 138 L482 197.5 L422 197 Z" fill="#1c2728"/>
<circle cx="451.5" cy="166.5" r="23" fill="none" stroke="#141d1e" stroke-width="1.6"/>
<circle cx="451.5" cy="166.5" r="21" fill="#1a2425"/>
<path d="M466 185.5 L481 185.5" stroke="#141d1e" stroke-width="1.2"/>
<path d="M421.5 197 L482 197.5" stroke="#2f2b26" stroke-width="1"/>
<!-- brush -->
<path d="M443.6 224 Q443 212 444.2 205 Q445.2 201 446.3 205 Q448.2 212 448.3 224 Z" fill="#d5cfc2"/>
<path d="M445.5 206 Q446.5 214 447.5 224" stroke="#a9a293" stroke-width="0.7" fill="none"/>
<rect x="442.5" y="223" width="6.2" height="131" fill="#1f2222"/>
<rect x="443.5" y="322.5" width="4.3" height="13.5" fill="#d96a33"/>
<rect x="443" y="353" width="5" height="4.5" fill="#2a2a2a"/>
<path d="M445.5 357.5 Q445.5 361 443.5 366" stroke="#d24a1e" stroke-width="1.1" fill="none"/>
<!-- brush rest -->
<rect x="424" y="230" width="53.5" height="8.7" fill="#2b2925"/>
<rect x="424.5" y="230.5" width="52.5" height="7.7" fill="none" stroke="#a49c8f" stroke-width="0.7"/>
<g stroke="#d9d1c3" stroke-width="0.8" fill="none"><path d="M427 236.5L430 232.5L433 236.5L436 232.5L439 236.5M452 232.5L455 236.5L458 232.5L461 236.5L464 232.5L467 236.5L470 232.5L473 236.5"/></g>
<rect x="442.5" y="229.5" width="6.2" height="10" fill="#1f2222"/>
<!-- dotted leader lines -->
<rect x="341.6" y="94.1" width="1.8" height="1.8" fill="#111"/><rect x="341.6" y="98.1" width="1.8" height="1.8" fill="#111"/><rect x="341.6" y="102.1" width="1.8" height="1.8" fill="#111"/><rect x="341.6" y="106.1" width="1.8" height="1.8" fill="#111"/><rect x="341.6" y="110.1" width="1.8" height="1.8" fill="#111"/><rect x="341.6" y="114.1" width="1.8" height="1.8" fill="#111"/><rect x="341.6" y="118.1" width="1.8" height="1.8" fill="#111"/><rect x="341.6" y="122.1" width="1.8" height="1.8" fill="#111"/><rect x="341.6" y="126.1" width="1.8" height="1.8" fill="#111"/>
<rect x="481.7" y="114.6" width="1.8" height="1.8" fill="#111"/><rect x="485.7" y="114.6" width="1.8" height="1.8" fill="#111"/><rect x="489.7" y="114.6" width="1.8" height="1.8" fill="#111"/><rect x="493.7" y="114.6" width="1.8" height="1.8" fill="#111"/><rect x="497.7" y="114.6" width="1.8" height="1.8" fill="#111"/><rect x="501.7" y="114.6" width="1.8" height="1.8" fill="#111"/>
<rect x="481.7" y="165.3" width="1.8" height="1.8" fill="#111"/><rect x="485.7" y="165.3" width="1.8" height="1.8" fill="#111"/><rect x="489.7" y="165.3" width="1.8" height="1.8" fill="#111"/><rect x="493.7" y="165.3" width="1.8" height="1.8" fill="#111"/><rect x="497.7" y="165.3" width="1.8" height="1.8" fill="#111"/><rect x="501.7" y="165.3" width="1.8" height="1.8" fill="#111"/>
<rect x="479.8" y="230.5" width="1.8" height="1.8" fill="#111"/><rect x="483.8" y="230.5" width="1.8" height="1.8" fill="#111"/><rect x="487.8" y="230.5" width="1.8" height="1.8" fill="#111"/><rect x="491.8" y="230.5" width="1.8" height="1.8" fill="#111"/><rect x="495.8" y="230.5" width="1.8" height="1.8" fill="#111"/><rect x="499.8" y="230.5" width="1.8" height="1.8" fill="#111"/><rect x="503.8" y="230.5" width="1.8" height="1.8" fill="#111"/>
<rect x="450.7" y="288.7" width="1.8" height="1.8" fill="#111"/><rect x="454.7" y="288.7" width="1.8" height="1.8" fill="#111"/><rect x="458.7" y="288.7" width="1.8" height="1.8" fill="#111"/><rect x="462.7" y="288.7" width="1.8" height="1.8" fill="#111"/><rect x="466.7" y="288.7" width="1.8" height="1.8" fill="#111"/><rect x="470.7" y="288.7" width="1.8" height="1.8" fill="#111"/><rect x="474.7" y="288.7" width="1.8" height="1.8" fill="#111"/><rect x="478.7" y="288.7" width="1.8" height="1.8" fill="#111"/><rect x="482.7" y="288.7" width="1.8" height="1.8" fill="#111"/><rect x="486.7" y="288.7" width="1.8" height="1.8" fill="#111"/><rect x="490.7" y="288.7" width="1.8" height="1.8" fill="#111"/><rect x="494.7" y="288.7" width="1.8" height="1.8" fill="#111"/><rect x="498.7" y="288.7" width="1.8" height="1.8" fill="#111"/><rect x="502.7" y="288.7" width="1.8" height="1.8" fill="#111"/>
<rect x="145.7" y="308.1" width="1.8" height="1.8" fill="#111"/><rect x="145.7" y="312.1" width="1.8" height="1.8" fill="#111"/><rect x="145.7" y="316.1" width="1.8" height="1.8" fill="#111"/><rect x="145.7" y="320.1" width="1.8" height="1.8" fill="#111"/><rect x="145.7" y="324.1" width="1.8" height="1.8" fill="#111"/><rect x="145.7" y="328.1" width="1.8" height="1.8" fill="#111"/><rect x="145.7" y="332.1" width="1.8" height="1.8" fill="#111"/><rect x="145.7" y="336.1" width="1.8" height="1.8" fill="#111"/><rect x="145.7" y="340.1" width="1.8" height="1.8" fill="#111"/><rect x="145.7" y="344.1" width="1.8" height="1.8" fill="#111"/><rect x="145.7" y="348.1" width="1.8" height="1.8" fill="#111"/><rect x="145.7" y="352.1" width="1.8" height="1.8" fill="#111"/><rect x="145.7" y="356.1" width="1.8" height="1.8" fill="#111"/><rect x="145.7" y="360.1" width="1.8" height="1.8" fill="#111"/><rect x="145.7" y="364.1" width="1.8" height="1.8" fill="#111"/><rect x="145.7" y="368.1" width="1.8" height="1.8" fill="#111"/><rect x="145.7" y="372.1" width="1.8" height="1.8" fill="#111"/><rect x="145.7" y="376.1" width="1.8" height="1.8" fill="#111"/><rect x="145.7" y="380.1" width="1.8" height="1.8" fill="#111"/><rect x="145.7" y="384.1" width="1.8" height="1.8" fill="#111"/><rect x="145.7" y="388.1" width="1.8" height="1.8" fill="#111"/><rect x="145.7" y="392.1" width="1.8" height="1.8" fill="#111"/><rect x="145.7" y="396.1" width="1.8" height="1.8" fill="#111"/><rect x="145.7" y="400.1" width="1.8" height="1.8" fill="#111"/><rect x="145.7" y="404.1" width="1.8" height="1.8" fill="#111"/>
<rect x="308.6" y="366.1" width="1.8" height="1.8" fill="#111"/><rect x="308.6" y="370.1" width="1.8" height="1.8" fill="#111"/><rect x="308.6" y="374.1" width="1.8" height="1.8" fill="#111"/><rect x="308.6" y="378.1" width="1.8" height="1.8" fill="#111"/><rect x="308.6" y="382.1" width="1.8" height="1.8" fill="#111"/><rect x="308.6" y="386.1" width="1.8" height="1.8" fill="#111"/><rect x="308.6" y="390.1" width="1.8" height="1.8" fill="#111"/><rect x="308.6" y="394.1" width="1.8" height="1.8" fill="#111"/><rect x="308.6" y="398.1" width="1.8" height="1.8" fill="#111"/><rect x="308.6" y="402.1" width="1.8" height="1.8" fill="#111"/>
<rect x="393.1" y="383.1" width="1.8" height="1.8" fill="#111"/><rect x="393.1" y="387.1" width="1.8" height="1.8" fill="#111"/><rect x="393.1" y="391.1" width="1.8" height="1.8" fill="#111"/><rect x="393.1" y="395.1" width="1.8" height="1.8" fill="#111"/><rect x="393.1" y="399.1" width="1.8" height="1.8" fill="#111"/><rect x="393.1" y="403.1" width="1.8" height="1.8" fill="#111"/>
</svg>
<div class="t" style="left:325px;top:75.5px;font-size:16px;color:#1a1a1a;-webkit-text-stroke:0.35px #1a1a1a">文镜</div>
<div class="t" style="left:515px;top:110px;font-size:16px;color:#1a1a1a;-webkit-text-stroke:0.35px #1a1a1a">墨</div>
<div class="t" style="left:515.5px;top:159px;font-size:16px;color:#1a1a1a;-webkit-text-stroke:0.35px #1a1a1a">砚</div>
<div class="t" style="left:515.5px;top:224px;font-size:16px;color:#1a1a1a;-webkit-text-stroke:0.35px #1a1a1a">笔山</div>
<div class="t" style="left:515.5px;top:282px;font-size:16px;color:#1a1a1a;-webkit-text-stroke:0.35px #1a1a1a">毛笔</div>
<div class="t" style="left:134.5px;top:413px;font-size:16px;color:#1a1a1a;-webkit-text-stroke:0.35px #1a1a1a">碑帖</div>
<div class="t" style="left:301px;top:412.5px;font-size:16px;color:#1a1a1a;-webkit-text-stroke:0.35px #1a1a1a">纸</div>
<div class="t" style="left:371.5px;top:413px;font-size:16px;color:#1a1a1a;-webkit-text-stroke:0.35px #1a1a1a">垫布</div>
<div class="t ln" style="left:88px;top:35.0px">一、垫布<span style="display:inline-block;width:9px"></span>放置在桌面的中央，以免墨汁渗透纸背污染桌面。</div>
<div class="t ln" style="left:88px;top:459.1px">二、纸<span style="display:inline-block;width:7px"></span>放置在垫布上面，书写练习用。</div>
<div class="t ln" style="left:88px;top:495.3px">三、砚台<span style="display:inline-block;width:7px"></span>放置在纸的右前方，磨墨并盛装墨汁用。</div>
<div class="t ln" style="left:88px;top:532.0px">四、墨<span style="display:inline-block;width:7px"></span>放在砚台的上方，研磨用。</div>
<div class="t ln" style="left:88px;top:567.9px">五、笔山<span style="display:inline-block;width:7px"></span>放置在砚台的下方，搁置毛笔，以免毛笔滚动。</div>
<div class="t ln" style="left:88px;top:605.2px">六、毛笔<span style="display:inline-block;width:7px"></span>放在笔山上，书写用。</div>
<div class="t ln" style="left:88px;top:642.0px">七、文镜<span style="display:inline-block;width:7px"></span>压在纸上，固定或压平纸张用。</div>
<div class="t ln" style="left:88px;top:678.5px">八、碑帖<span style="display:inline-block;width:7px"></span>放置在纸的左边或前方，临摹或学习用。</div>
</div>
<div id="page2" class="a"></div>
<!-- doc shadows -->
<div class="a" style="left:326px;top:84px;width:611px;height:8px;background:linear-gradient(#d4d4d4,#e2e2e2 45%,#d0d0d0)"></div>
<div class="a" style="left:316px;top:84px;width:10px;height:807px;background:linear-gradient(90deg,#ebebeb,#dedede 40%,#cdcdcd)"></div><div class="a" style="left:316px;top:84px;width:10px;height:8px;background:linear-gradient(rgba(0,0,0,0.06),rgba(0,0,0,0))"></div>
<div class="a" style="left:925px;top:84px;width:12px;height:807px;background:linear-gradient(90deg,#c2c2c2,#d3d3d3 25%,#d6d6d6 55%,#dedede 60%,#dedede)"></div>
<div class="a" style="left:326px;top:867px;width:599px;height:8px;background:linear-gradient(#d0d0d0,#d8d8d8 50%,#d2d2d2)"></div>
<div class="a" style="left:38px;top:84px;width:278px;height:5px;background:linear-gradient(#e9e9e9,#f3f3f3)"></div>
<div class="a" style="left:0;top:83px;width:937px;height:1px;background:#e6e6e6"></div>
<div class="a" style="left:0;top:890px;width:937px;height:1px;background:#dadada"></div>
<!-- doc scrollbar thumb -->
<div class="a" style="left:933px;top:132px;width:10px;height:42px;border-radius:5px;border:1px solid #a8a8a8;background:#f8f8f8"></div>
<!-- blue float button -->
<div class="a" style="left:899px;top:95px;width:30px;height:30px;border-radius:50%;background:#fff"></div>
<div class="a" style="left:900px;top:96px;width:28px;height:28px;border-radius:50%;background:#4186ee"></div>
<svg class="a" style="left:904px;top:100px" width="20" height="20" viewBox="0 0 20 20"><rect x="5.1" y="3.9" width="10" height="7.1" fill="#fff"/><rect x="9.1" y="8.1" width="8" height="8" stroke="#fff" stroke-width="1.2" fill="#4186ee"/><path d="M10.7 9.7V14.4L13.1 12.1L15.5 14.4V9.7" stroke="#fff" stroke-width="1" fill="none"/><path d="M2.4 11.2V15.4H7.2M5.7 13.8L7.4 15.4L5.7 17" stroke="#fff" stroke-width="1" fill="none"/></svg>
<!-- page badge -->
<div class="a" style="left:838px;top:852px;width:83px;height:32px;border-radius:4px;border:1px solid #7c7c7c;background:rgba(110,110,110,0.42)"></div>
<div class="t" style="left:862px;top:861px;font-size:13.5px;color:#f2f2f2">第8页</div>

</body></html>
